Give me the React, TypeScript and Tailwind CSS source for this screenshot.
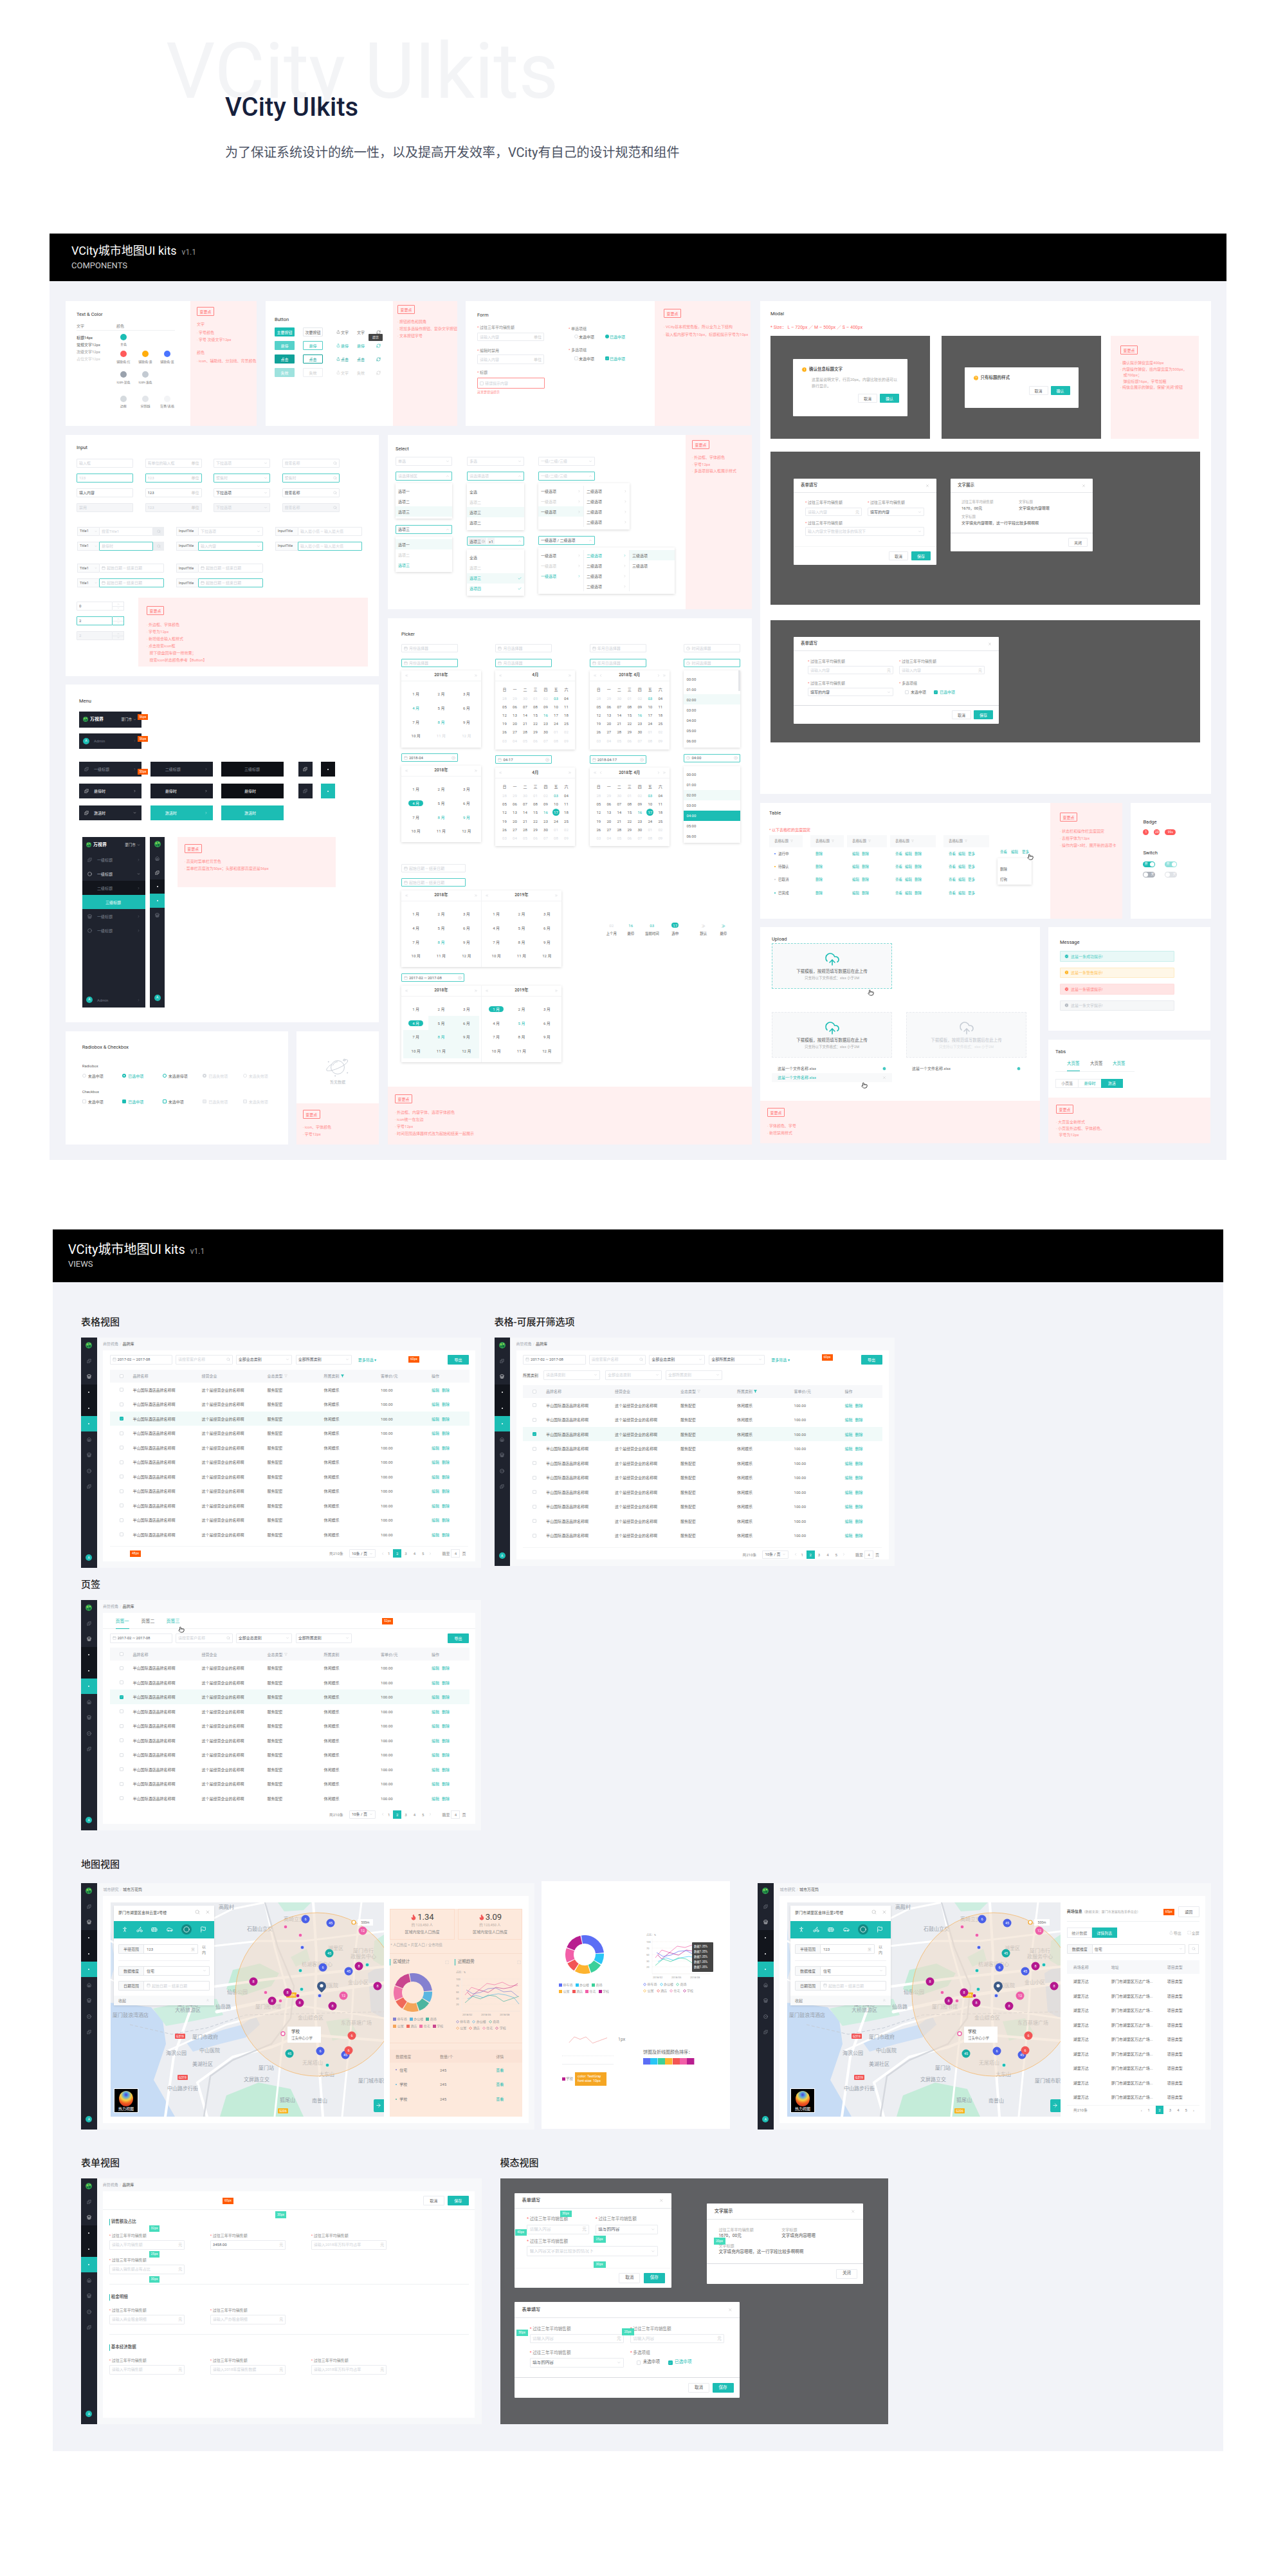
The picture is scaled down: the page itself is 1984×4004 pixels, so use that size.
import React, { type ReactNode } from 'react'
import {
  ArrowRight, Bike, Bus, Calendar, Car, Check, ChevronDown, ChevronLeft, ChevronRight, ChevronUp, ChevronsLeft,
  ChevronsRight, ChevronsUp, Circle, CircleAlert, CircleCheck, CircleHelp, CircleX, Clock, CloudUpload,
  Filter, Flag, Flame, House, Info, Maximize, PersonStanding, Pointer, Puzzle, RefreshCw, Search, Share, Store, X,
} from 'lucide-react'

const ico = 'h-[6px] w-[6px] shrink-0 text-[#c4c8ce]'
const tiny = 'text-[6px] leading-[10px] whitespace-nowrap'
const head = 'text-[7.5px] leading-[10px] whitespace-nowrap text-[#333]'

const Note = ({ lines, className = '', gap = 'leading-[11px]', top = 'mt-[8px]' }: { lines: string[]; className?: string; gap?: string; top?: string }) => (
  <div className={`bg-[#fff0f0] ${className}`}>
    <div className="flex h-[14px] w-[27px] items-center justify-center rounded-[1px] border border-[#ff8080] text-[6px] text-[#ff7070]">变更点</div>
    <div className={top}>
      {lines.map((l, i) => (
        <p key={i} className={`text-[6px] text-[#ff8f8f] whitespace-pre ${gap}`}>{l}</p>
      ))}
    </div>
  </div>
)

const Field = ({ className = '', text, dark, start, end, focus, off }: { className?: string; text?: string; dark?: boolean; start?: ReactNode; end?: ReactNode; focus?: boolean; off?: boolean }) => (
  <div className={`flex shrink-0 items-center gap-[2px] rounded-[1px] border px-[3px] text-[6px] leading-none ${focus ? 'border-[#4fcdc6]' : 'border-[#e9ebef]'} ${off ? 'bg-[#f5f6f8]' : 'bg-white'} ${className}`}>
    {start}
    <span className={`min-w-0 flex-1 overflow-hidden whitespace-nowrap ${dark ? 'text-[#555b66]' : 'text-[#cfd3d9]'}`}>{text}</span>
    {end}
  </div>
)

const Btn = ({ text, className = '' }: { text: string; className?: string }) => (
  <div className={`flex shrink-0 items-center justify-center rounded-[1px] text-[6px] ${className}`}>{text}</div>
)
const Cancel = ({ text = '取消' }: { text?: string }) => <Btn text={text} className="h-[14px] w-[30px] border border-[#e9ebef] bg-white text-[#666]" />
const Save = ({ text = '保存' }: { text?: string }) => <Btn text={text} className="h-[14px] w-[30px] bg-[#1cbdb4] text-white" />

const Logo = ({ size = 'h-[10px] w-[10px]' }: { size?: string }) => (
  <svg viewBox="0 0 20 20" className={`shrink-0 ${size}`}>
    <circle cx="10" cy="10" r="10" fill="#2f9e4f" />
    <circle cx="6" cy="7" r="3" fill="#7dd04d" />
    <circle cx="13" cy="13" r="3.5" fill="#0f6d3a" />
    <circle cx="14" cy="6" r="2" fill="#b7e05a" />
    <circle cx="6" cy="14" r="2" fill="#115e36" />
  </svg>
)

const Avatar = () => <div className="flex h-[10px] w-[10px] shrink-0 items-center justify-center rounded-full bg-[#1cbdb4] text-[5px] text-white">A</div>

const Cursor = ({ className }: { className: string }) => (
  <div className={`absolute ${className}`}>
    <Pointer className="h-[10px] w-[10px] fill-white text-[#333]" />
  </div>
)

const Tag = ({ text, className, orange }: { text: string; className: string; orange?: boolean }) => (
  <div className={`absolute z-10 flex items-center justify-center text-[5px] text-white ${orange ? 'bg-[#ff5a00]' : 'bg-[#45dcbc]'} ${className}`}>{text}</div>
)

/* ---------- hero ---------- */

const Hero = () => (
  <div className="relative h-[363px] pl-[350px] pt-[142px]">
    <div className="absolute left-[258px] top-[36px] text-[120px] font-normal leading-[150px] whitespace-nowrap text-[#f3f4f6]">VCity UIkits</div>
    <h1 className="relative text-[40px] font-medium leading-[50px] text-[#16203c]">VCity UIkits</h1>
    <p className="relative mt-[30px] text-[20px] leading-[30px] text-[#4b5263]">为了保证系统设计的统一性，以及提高开发效率，VCity有自己的设计规范和组件</p>
  </div>
)

const SectionHead = ({ title, sub, h, size, pad }: { title: string; sub: string; h: string; size: string; pad: string }) => (
  <div className={`flex flex-col justify-center bg-black text-white ${h} ${pad}`}>
    <div className="flex items-baseline">
      <span className={`leading-[26px] ${size}`}>{title}</span>
      <span className="ml-[8px] text-[12px] text-[#9a9a9a]">v1.1</span>
    </div>
    <div className="text-[13px] leading-[20px] text-[#d0d0d0]">{sub}</div>
  </div>
)

/* ---------- row one ---------- */

const Swatch = ({ c, t, mt }: { c: string; t: string; mt: string }) => (
  <div className="flex w-[34px] flex-col items-center">
    <div className={`h-[10px] w-[10px] rounded-full ${c}`} />
    <div className={`text-[5px] leading-[8px] whitespace-nowrap text-[#777] ${mt}`}>{t}</div>
  </div>
)

const TextColor = () => (
  <div className="flex h-[194px] w-[297px] bg-white">
    <div className="w-[194px] pl-[17px] pt-[16px]">
      <div className={head}>Text &amp; Color</div>
      <div className={`mt-[8px] flex w-[153px] border-b border-[#eef0f2] pb-[1px] ${tiny} text-[#888]`}>
        <span className="w-[62px]">文字</span>
        <span>颜色</span>
      </div>
      <div className="flex pt-[5px]">
        <div className="w-[56px] text-[6px] leading-[11px] whitespace-nowrap">
          <p className="text-[#333]">标题14px</p>
          <p className="text-[#666]">常规文字12px</p>
          <p className="text-[#999]">次级文字12px</p>
          <p className="text-[#ccc]">占位文字12px</p>
        </div>
        <div>
          <Swatch c="bg-[#1cbdb4]" t="主色" mt="mt-[2px]" />
          <div className="mt-[6px] flex">
            <Swatch c="bg-[#ff5a5a]" t="辅助色-红" mt="mt-[3px]" />
            <Swatch c="bg-[#ffad0d]" t="辅助色-黄" mt="mt-[3px]" />
            <Swatch c="bg-[#4a74ff]" t="辅助色-蓝" mt="mt-[3px]" />
          </div>
          <div className="mt-[11px] flex">
            <Swatch c="bg-[#9aa2ad]" t="icon-深色" mt="mt-[3px]" />
            <Swatch c="bg-[#c3cad2]" t="icon-浅色" mt="mt-[3px]" />
          </div>
          <div className="mt-[17px] flex">
            <Swatch c="bg-[#d5dade]" t="边框" mt="mt-[2px]" />
            <Swatch c="bg-[#e3e6ea]" t="分割线" mt="mt-[2px]" />
            <Swatch c="bg-[#f3f4f6]" t="背景/表格" mt="mt-[2px]" />
          </div>
        </div>
      </div>
    </div>
    <div className="relative flex-1 bg-[#fff0f0] pl-[10px] pt-[9px]">
      <div className="flex h-[14px] w-[27px] items-center justify-center rounded-[1px] border border-[#ff8080] text-[6px] text-[#ff7070]">变更点</div>
      <div className="mt-[8px] text-[6px] text-[#ff8f8f]">
        <p className="leading-[10px]">文字</p>
        <p className="mt-[2px] leading-[11px]">· 字号颜色</p>
        <p className="leading-[11px]">· 字号 次级文字12px</p>
        <p className="mt-[9px] leading-[11px]">颜色</p>
        <p className="mt-[2px] leading-[11px] whitespace-nowrap">· icon、辅助线、分割线、背景颜色</p>
      </div>
    </div>
  </div>
)

const ButtonCard = () => {
  const col1 = ['bg-[#1cbdb4]', 'bg-[#55d1ca]', 'bg-[#10a199]', 'bg-[#9ee2de]']
  const col1t = ['主要按钮', '悬停', '点击', '失效']
  const col2 = ['border-[#e4e6ea] text-[#666]', 'border-[#4fcdc6] text-[#1cbdb4]', 'border-[#10a199] text-[#10a199]', 'border-[#eceef1] bg-[#f5f6f8] text-[#ccc]']
  const col2t = ['次要按钮', '悬停', '点击', '失效']
  const link = ['text-[#777]', 'text-[#1cbdb4]', 'text-[#10a199]', 'text-[#ccc]']
  const col3t = ['文字', '悬停', '点击', '文字']
  const col4t = ['文字', '悬停', '点击', '失效']
  return (
    <div className="flex h-[194px] w-[298px] bg-white">
      <div className="relative w-[205px] pl-[14px] pt-[24px]">
        <div className={head}>Button</div>
        <div className="mt-[7px] flex flex-col gap-[7px]">
          {col1.map((c, i) => (
            <div key={i} className="flex h-[14px] items-center">
              <Btn text={col1t[i]} className={`h-[14px] w-[31px] text-white ${c}`} />
              <Btn text={col2t[i]} className={`ml-[13px] h-[14px] w-[31px] border bg-white ${col2[i]}`} />
              <div className={`ml-[21px] flex w-[32px] items-center gap-[1px] text-[6px] ${link[i]}`}><Share className="h-[6px] w-[6px]" />{col3t[i]}</div>
              <div className={`w-[30px] text-[6px] ${link[i]}`}>{col4t[i]}</div>
              <RefreshCw className={`h-[7px] w-[7px] ${link[i]}`} />
            </div>
          ))}
        </div>
        <div className="absolute left-[160px] top-[51px] flex h-[11px] w-[22px] items-center justify-center rounded-[1px] bg-[#444] text-[5px] text-white">提示</div>
      </div>
      <Note className="flex-1 pl-[7px] pt-[6px]" top="mt-[6px]" gap="leading-[11px]" lines={['· 按钮颜色和圆角', '· 增加多选操作按钮、复杂文字按钮', '· 文本按钮字号']} />
    </div>
  )
}

const FormLabel = ({ text, className = '' }: { text: string; className?: string }) => (
  <div className={`${tiny} text-[#888] ${className}`}><span className="text-[#ff6b6b]">* </span>{text}</div>
)

const CheckBox = ({ on }: { on?: boolean }) => (
  <div className={`flex h-[6px] w-[6px] shrink-0 items-center justify-center rounded-[1px] border ${on ? 'border-[#1cbdb4] bg-[#1cbdb4]' : 'border-[#dde0e4] bg-white'}`}>
    {on && <Check className="h-[5px] w-[5px] text-white" />}
  </div>
)

const FormCard = () => (
  <div className="flex h-[194px] w-[443px] bg-white">
    <div className="w-[294px] pl-[18px] pt-[17px]">
      <div className={head}>Form</div>
      <div className="flex">
        <div className="w-[142px] pt-[9px]">
          <FormLabel text="过往三年平均销售额" />
          <Field className="mt-[3px] h-[13px] w-[104px]" text="请输入内容" end={<span className="text-[#ccc]">单位</span>} />
          <FormLabel className="mt-[10px]" text="编辑时禁用" />
          <Field className="mt-[1px] h-[15px] w-[104px]" text="请输入内容" end={<span className="text-[#ccc]">单位</span>} />
          <FormLabel className="mt-[8px]" text="标题" />
          <Field className="mt-[3px] h-[17px] w-[105px] !border-[#ff8a8a]" start={<CheckBox />} text="错误提示内容" />
          <div className="text-[5px] leading-[10px] text-[#ff8080]">这里是错误提示</div>
        </div>
        <div className="pt-[11px]">
          <div className={`${tiny} text-[#888]`}><span className="text-[#ff6b6b]">* </span>单选项组</div>
          <div className="mt-[2px] flex h-[10px] items-center text-[6px]"><div className="ml-[9px] h-[6px] w-[6px] rounded-full border border-[#dde0e4]" /><span className="ml-[1px] w-[41px] text-[#666]">未选中项</span><div className="h-[6px] w-[6px] rounded-full bg-[#1cbdb4]" /><span className="ml-[1px] text-[#1cbdb4]">已选中项</span></div>
          <div className={`${tiny} mt-[11px] text-[#888]`}><span className="text-[#ff6b6b]">* </span>多选项组</div>
          <div className="mt-[3px] flex h-[10px] items-center text-[6px]"><span className="ml-[9px]"><CheckBox /></span><span className="ml-[1px] w-[41px] text-[#666]">未选中项</span><CheckBox on /><span className="ml-[1px] text-[#1cbdb4]">已选中项</span></div>
        </div>
      </div>
    </div>
    <Note className="flex-1 pl-[14px] pt-[12px]" top="mt-[8px]" gap="leading-[12px]" lines={['· VCity基本视觉色板，所以全为上下结构', '· 输入框内部字号为10px，标题和提示字号为10px']} />
  </div>
)

/* ---------- input card ---------- */

const InputRow = ({ cells }: { cells: ReactNode[] }) => <div className="flex gap-[18.5px]">{cells}</div>

const unit = <span className="text-[#ccc]">单位</span>
const sel = <ChevronDown className={ico} />
const srch = <Search className={ico} />
const cal = <Calendar className={ico} />

const Group = ({ head: title, children, w = 'w-[34px]', noArrow }: { head: string; children: ReactNode; w?: string; noArrow?: boolean }) => (
  <div className="flex h-[14px] w-[135px]">
    <div className={`flex shrink-0 items-center justify-between rounded-l-[1px] border border-r-0 border-[#e9ebef] bg-[#fafbfc] px-[3px] text-[5.5px] text-[#666] ${w}`}>{title}{!noArrow && <ChevronDown className="h-[4px] w-[4px] text-[#bbb]" />}</div>
    <div className="flex min-w-0 flex-1">{children}</div>
  </div>
)

const InputCard = () => (
  <div className="h-[375px] w-[487px] bg-white pl-[17px] pt-[15px]">
    <div className={head}>Input</div>
    <div className="mt-[12px] flex flex-col gap-[9px]">
      <InputRow cells={[
        <Field key="a" className="h-[14px] w-[88px]" text="输入框" />,
        <Field key="b" className="h-[14px] w-[88px]" text="有单位的输入框" end={unit} />,
        <Field key="c" className="h-[14px] w-[88px]" text="下拉选项" end={sel} />,
        <Field key="d" className="h-[14px] w-[89px]" text="搜索名称" end={srch} />,
      ]} />
      <InputRow cells={[
        <Field key="a" focus className="h-[14px] w-[88px]" text="123" />,
        <Field key="b" focus className="h-[14px] w-[88px]" text="123" end={unit} />,
        <Field key="c" focus className="h-[14px] w-[88px]" text="聚焦时" end={sel} />,
        <Field key="d" focus className="h-[14px] w-[89px]" text="聚焦时" end={srch} />,
      ]} />
      <InputRow cells={[
        <Field key="a" dark className="h-[14px] w-[88px]" text="填入内容" />,
        <Field key="b" dark className="h-[14px] w-[88px]" text="123" end={unit} />,
        <Field key="c" dark className="h-[14px] w-[88px]" text="下拉选项" end={sel} />,
        <Field key="d" dark className="h-[14px] w-[89px]" text="搜索名称" end={srch} />,
      ]} />
      <InputRow cells={[
        <Field key="a" off className="h-[14px] w-[88px]" text="禁用" />,
        <Field key="b" off className="h-[14px] w-[88px]" text="123" end={unit} />,
        <Field key="c" off className="h-[14px] w-[88px]" text="下拉选项" end={sel} />,
        <Field key="d" off className="h-[14px] w-[89px]" text="搜索名称" end={srch} />,
      ]} />
    </div>
    <div className="ml-[1px] mt-[22.5px] flex flex-col gap-[9px]">
      <div className="flex gap-[19px]">
        <Group head="Title1"><Field className="h-[14px] flex-1" text="搜索Title1" /><div className="flex w-[17px] items-center justify-center bg-[#eceef1]">{srch}</div></Group>
        <Group head="InputTitle" noArrow><Field className="h-[14px] flex-1" text="下拉选项" end={sel} /></Group>
        <Group head="InputTitle" noArrow w="w-[35px]"><Field className="h-[14px] flex-1" text="输入最小值   ~   输入最大值" /></Group>
      </div>
      <div className="flex gap-[19px]">
        <Group head="Title1"><Field focus className="h-[14px] flex-1" text="悬停时" /><div className="flex w-[17px] items-center justify-center bg-[#eceef1]">{srch}</div></Group>
        <Group head="InputTitle" noArrow><Field focus className="h-[14px] flex-1" text="输入内容" end={sel} /></Group>
        <Group head="InputTitle" noArrow w="w-[35px]"><Field focus className="h-[14px] flex-1" text="输入最小值   ~   输入最大值" /></Group>
      </div>
    </div>
    <div className="ml-[1px] mt-[20.5px] flex flex-col gap-[9px]">
      <div className="flex gap-[19px]">
        <Group head="Title1"><Field className="h-[14px] flex-1" start={cal} text="起始日期  ~  结束日期" /></Group>
        <Group head="InputTitle" noArrow><Field className="h-[14px] flex-1" start={cal} text="起始日期  ~  结束日期" /></Group>
      </div>
      <div className="flex gap-[19px]">
        <Group head="Title1"><Field focus className="h-[14px] flex-1" start={cal} text="起始日期  ~  结束日期" /></Group>
        <Group head="InputTitle" noArrow><Field focus className="h-[14px] flex-1" start={cal} text="起始日期  ~  结束日期" /></Group>
      </div>
    </div>
    <div className="mt-[16px] flex">
      <div className="flex w-[96px] flex-col gap-[9px] pt-[6px]">
        {[{ t: '0', f: false, o: false }, { t: '2', f: true, o: false }, { t: '2', f: false, o: true }].map((n, i) => (
          <div key={i} className="flex h-[14px] w-[74px]">
            <Field dark={!n.o} focus={n.f} off={n.o} className="h-[14px] flex-1" text={n.t} />
            <div className={`flex w-[18px] flex-col border border-l-0 ${n.f ? 'border-[#4fcdc6]' : 'border-[#e9ebef]'} ${n.o ? 'bg-[#f5f6f8]' : ''}`}>
              <div className="flex flex-1 items-center justify-center border-b border-[#e9ebef]"><ChevronUp className="h-[4px] w-[4px] text-[#bbb]" /></div>
              <div className="flex flex-1 items-center justify-center"><ChevronDown className="h-[4px] w-[4px] text-[#bbb]" /></div>
            </div>
          </div>
        ))}
      </div>
      <Note className="h-[107px] w-[357px] pl-[13px] pt-[13px]" top="mt-[9px]" gap="leading-[11px]" lines={['· 外边框、字体颜色', '· 字号为12px', '· 新增组合输入框样式', '· 点击搜索icon框', '   按下键盘回车键一样效果；', '   搜索icon状态颜色参考【Button】']} />
    </div>
  </div>
)

/* ---------- select ---------- */

const Opt = ({ t, tone = 'text-[#666]', bg = '', end }: { t: string; tone?: string; bg?: string; end?: ReactNode }) => (
  <div className={`flex h-[16px] items-center justify-between px-[4px] text-[6px] whitespace-nowrap ${tone} ${bg}`}>{t}{end}</div>
)
const drop = 'bg-white shadow-[0_1px_4px_rgba(0,0,0,0.16)]'
const arrowR = <ChevronRight className="h-[5px] w-[5px] text-[#bbb]" />
const arrowT = <ChevronRight className="h-[5px] w-[5px] text-[#1cbdb4]" />

const SelectCard = () => (
  <div className="flex h-[271px] w-[566px] bg-white">
    <div className="w-[463px] pl-[12px] pt-[16.5px]">
      <div className={head}>Select</div>
      <div className="mt-[7px] flex">
        <div className="w-[111px]">
          <Field className="h-[14px] w-[88px]" text="单选" end={sel} />
          <Field focus className="mt-[9px] h-[14px] w-[88px]" text="请选择城区" end={<ChevronUp className={ico} />} />
          <div className={`mt-[4.5px] w-[88px] pb-[3px] pt-[4px] ${drop}`}>
            <Opt t="选项一" /><Opt t="选项二" /><Opt t="选项三" bg="bg-[#f1faf9]" />
          </div>
          <Field focus dark className="mt-[9.5px] h-[14px] w-[88px]" text="选项三" end={<ChevronUp className={ico} />} />
          <div className={`mt-[4.5px] w-[88px] pb-[3px] pt-[4px] ${drop}`}>
            <Opt t="选项一" bg="bg-[#f1faf9]" /><Opt t="选项二" tone="text-[#ccc]" /><Opt t="选项三" tone="text-[#1cbdb4]" />
          </div>
        </div>
        <div className="w-[111px]">
          <Field className="h-[14px] w-[88.5px]" text="多选" end={sel} />
          <Field focus className="mt-[9px] h-[14px] w-[88.5px]" text="请选择选项" end={<ChevronUp className={ico} />} />
          <div className={`mt-[4.5px] w-[88.5px] pb-[4px] pt-[5px] ${drop}`}>
            <Opt t="全选" /><Opt t="选项二" tone="text-[#ccc]" /><Opt t="选项三" bg="bg-[#f1faf9]" /><Opt t="选项二" />
          </div>
          <div className="mt-[10px] flex h-[14px] w-[88.5px] items-center gap-[2px] rounded-[1px] border border-[#4fcdc6] px-[1px] text-[6px] text-[#666]">
            <span className="flex h-[10px] items-center gap-[1px] bg-[#f1f2f4] px-[2px]">选项三<CircleX className="h-[5px] w-[5px] text-[#aaa]" /></span>
            <span className="flex h-[10px] items-center bg-[#f1f2f4] px-[2px]">+1</span>
            <span className="ml-auto mr-[2px]"><ChevronUp className={ico} /></span>
          </div>
          <div className={`mt-[5.5px] w-[88.5px] pb-[3px] pt-[5px] ${drop}`}>
            <Opt t="全选" /><Opt t="选项二" tone="text-[#ccc]" />
            <Opt t="选项三" tone="text-[#1cbdb4]" bg="bg-[#f1faf9]" end={<Check className="h-[6px] w-[6px] text-[#1cbdb4]" />} />
            <Opt t="选项四" tone="text-[#1cbdb4]" end={<Check className="h-[6px] w-[6px] text-[#1cbdb4]" />} />
          </div>
        </div>
        <div>
          <Field className="h-[14px] w-[88px]" text="一级/二级/三级" end={sel} />
          <Field focus className="mt-[9px] h-[14px] w-[88px]" text="一级/二级/三级" end={<ChevronUp className={ico} />} />
          <div className={`mt-[4.5px] flex w-[141.5px] py-[4px] ${drop}`}>
            <div className="w-[71px] border-r border-[#f0f1f3]">
              <Opt t="一级选项" end={arrowR} /><Opt t="一级选项" tone="text-[#ccc]" end={arrowR} /><Opt t="一级选项" bg="bg-[#f1faf9]" end={arrowR} />
            </div>
            <div className="flex-1">
              <Opt t="二级选项" end={arrowR} /><Opt t="二级选项" end={arrowR} /><Opt t="二级选项" end={arrowR} /><Opt t="二级选项" end={arrowR} />
            </div>
          </div>
          <Field focus dark className="mt-[9.5px] h-[14px] w-[88px]" text="一级选项 / 二级选项" end={<ChevronUp className={ico} />} />
          <div className={`mt-[4.5px] flex w-[212px] py-[4px] ${drop}`}>
            <div className="w-[71px] border-r border-[#f0f1f3]">
              <Opt t="一级选项" end={arrowR} /><Opt t="一级选项" tone="text-[#ccc]" end={arrowR} /><Opt t="一级选项" tone="text-[#1cbdb4]" end={arrowT} />
            </div>
            <div className="w-[71px] border-r border-[#f0f1f3]">
              <Opt t="二级选项" tone="text-[#1cbdb4]" end={arrowT} /><Opt t="二级选项" end={arrowR} /><Opt t="二级选项" end={arrowR} /><Opt t="二级选项" end={arrowR} />
            </div>
            <div className="flex-1">
              <Opt t="三级选项" bg="bg-[#f1faf9]" /><Opt t="三级选项" />
            </div>
          </div>
        </div>
      </div>
    </div>
    <Note className="flex-1 pl-[10px] pt-[8px]" top="mt-[8px]" gap="leading-[10.7px]" lines={['· 外边框、字体颜色', '· 字号12px', '· 多选项目输入框展示样式']} />
  </div>
)

/* ---------- picker ---------- */

const PanelHead = ({ title, inner }: { title: string; inner?: boolean }) => (
  <div className="flex h-[17px] items-center justify-between border-b border-[#f2f3f5] px-[5px] text-[6.5px] font-medium text-[#444]">
    <span className="flex gap-[3px]"><ChevronsLeft className={ico} />{inner && <ChevronLeft className={ico} />}</span>
    <span>{title}</span>
    <span className="flex gap-[3px]">{inner && <ChevronRight className={ico} />}<ChevronsRight className={ico} /></span>
  </div>
)

const MonthGrid = ({ teal = [], mute = [], on = [], band = [] }: { teal?: number[]; mute?: number[]; on?: number[]; band?: number[] }) => (
  <div className="grid grid-cols-3 px-[3px] pt-[9px]">
    {Array.from({ length: 12 }, (_, i) => i + 1).map(m => (
      <div key={m} className={`flex h-[21.7px] items-center justify-center text-[6px] ${band.includes(m) ? 'bg-[#f1faf9]' : ''}`}>
        <span className={`rounded-full px-[6px] py-[1px] leading-[7px] ${on.includes(m) ? 'bg-[#1cbdb4] text-white' : teal.includes(m) ? 'text-[#1cbdb4]' : mute.includes(m) ? 'text-[#d5d8dd]' : 'text-[#666]'}`}>{m} 月</span>
      </div>
    ))}
  </div>
)

const MonthPanel = ({ h = 'h-[119px]', ...rest }: { h?: string; teal?: number[]; mute?: number[]; on?: number[] }) => (
  <div className={`w-[124px] ${drop} ${h}`}>
    <PanelHead title="2018年" />
    <MonthGrid {...rest} />
  </div>
)

const days = ['28', '29', '30', '01', '02', '03', '04', '05', '06', '07', '08', '09', '10', '11', '12', '13', '14', '15', '16', '17', '18', '19', '20', '21', '22', '23', '24', '25', '26', '27', '28', '29', '30', '01', '02', '03', '04', '05', '06', '07', '08', '09']

const DatePanel = ({ title, inner, on, h = 'h-[123.4px]' }: { title: string; inner?: boolean; on?: boolean; h?: string }) => (
  <div className={`w-[124px] ${drop} ${h}`}>
    <PanelHead title={title} inner={inner} />
    <div className="grid grid-cols-7 px-[6px] pt-[6px] text-center text-[6px]">
      {['日', '一', '二', '三', '四', '五', '六'].map(d => <div key={d} className="h-[13.5px] leading-[13.5px] text-[#666]">{d}</div>)}
      {days.map((d, i) => {
        const muted = i < 5 || i >= 33
        const teal = i === 5 || i === 18
        const sel17 = on && i === 19
        return (
          <div key={i} className="flex h-[13.2px] items-center justify-center">
            <span className={`flex h-[11px] w-[11px] items-center justify-center rounded-full ${sel17 ? 'bg-[#1cbdb4] text-white' : teal ? 'text-[#1cbdb4]' : muted ? 'text-[#d8dbdf]' : 'text-[#666]'}`}>{d}</span>
          </div>
        )
      })}
    </div>
  </div>
)

const TimePanel = ({ active, scroll, h }: { active?: boolean; scroll?: boolean; h: string }) => (
  <div className={`relative w-[88px] pt-[5px] ${drop} ${h}`}>
    {['00:00', '01:00', '02:00', '03:00', '04:00', '05:00', '06:00'].map((t, i) => (
      <div key={t} className={`flex h-[16px] items-center pl-[4px] text-[6px] ${i === 2 ? 'bg-[#f1faf9] text-[#666]' : active && i === 4 ? 'bg-[#1cbdb4] text-white' : 'text-[#666]'}`}>{t}</div>
    ))}
    {scroll && <div className="absolute right-0 top-0 h-[32px] w-[3px] bg-[#e4e6e9]" />}
  </div>
)

const RangePanel = ({ second }: { second?: boolean }) => (
  <div className={`flex h-[119px] w-[249px] ${drop}`}>
    <div className="w-[125px] border-r border-[#f2f3f5]">
      <PanelHead title="2018年" />
      {second ? <MonthGrid on={[4]} teal={[8]} band={[5, 6, 7, 8, 9, 10, 11, 12]} /> : <MonthGrid teal={[8]} />}
    </div>
    <div className="flex-1">
      <PanelHead title="2019年" />
      {second ? <MonthGrid on={[1]} teal={[5]} /> : <MonthGrid />}
    </div>
  </div>
)

const clock = <Clock className={ico} />
const xc = <CircleX className={ico} />

const Legend = ({ v, tone, t, w, pill }: { v: string; tone: string; t: string; w: string; pill?: boolean }) => (
  <div className={`flex flex-col items-center ${w}`}>
    <div className={`flex h-[10px] items-center text-[6px] ${tone}`}>
      {pill ? <span className="flex h-[8px] w-[11px] items-center justify-center rounded-full bg-[#1cbdb4] text-white">{v}</span> : v}
    </div>
    <div className="mt-[3px] text-[5.5px] leading-[10px] whitespace-nowrap text-[#555]">{t}</div>
  </div>
)

const PickerCard = () => (
  <div className="flex h-[818px] w-[566px] flex-col justify-between bg-white">
    <div className="pl-[21px] pt-[20px]">
      <div className={head}>Picker</div>
      <div className="mt-[10px] flex">
        <div className="w-[146.4px]">
          <Field className="h-[13px] w-[88px]" start={cal} text="月份选择器" />
          <Field focus className="mt-[10px] h-[13px] w-[88px]" start={cal} text="月份选择器" />
          <div className="mt-[5px]"><MonthPanel h="h-[120px]" teal={[4, 8]} mute={[11, 12]} /></div>
          <Field focus dark className="mt-[9px] h-[13px] w-[88px]" start={cal} text="2018-04" end={xc} />
          <div className="mt-[6px]"><MonthPanel on={[4]} teal={[8, 9]} /></div>
        </div>
        <div className="w-[146.4px]">
          <Field className="h-[13px] w-[88px]" start={cal} text="月日选择器" />
          <Field focus className="mt-[10px] h-[13px] w-[88px]" start={cal} text="月日选择器" />
          <div className="mt-[5px]"><DatePanel title="4月" /></div>
          <Field focus dark className="mt-[9px] h-[13px] w-[88px]" start={cal} text="04-17" end={xc} />
          <div className="mt-[6px]"><DatePanel title="4月" on h="h-[122px]" /></div>
        </div>
        <div className="w-[146.6px]">
          <Field className="h-[13px] w-[88px]" start={cal} text="年月日选择器" />
          <Field focus className="mt-[10px] h-[13px] w-[88px]" start={cal} text="年月日选择器" />
          <div className="mt-[5px]"><DatePanel title="2018年 4月" inner /></div>
          <Field focus dark className="mt-[9px] h-[13px] w-[88px]" start={cal} text="2018-04-17" end={xc} />
          <div className="mt-[6px]"><DatePanel title="2018年 4月" inner on h="h-[122px]" /></div>
        </div>
        <div>
          <Field className="h-[13px] w-[88px]" start={clock} text="时间选择器" />
          <Field focus className="mt-[10px] h-[13px] w-[88px]" start={clock} text="时间选择器" />
          <div className="mt-[5px]"><TimePanel h="h-[120px]" scroll /></div>
          <Field focus dark className="mt-[9.5px] h-[13px] w-[88px]" start={clock} text="04:00" end={xc} />
          <div className="mt-[6px]"><TimePanel h="h-[119px]" active /></div>
        </div>
      </div>
      <div className="mt-[27.7px] flex">
        <div className="w-[249px]">
          <Field className="h-[13px] w-[100px]" start={cal} text="起始日期   ~   结束日期" />
          <Field focus className="mt-[9px] h-[13px] w-[100px]" start={cal} text="起始日期   ~   结束日期" />
          <div className="mt-[6px]"><RangePanel /></div>
          <Field focus dark className="mt-[10px] h-[13px] w-[98px]" start={cal} text="2017-02   ~   2017-08" end={xc} />
          <div className="mt-[5.7px]"><RangePanel second /></div>
        </div>
        <div className="ml-[62.7px] flex pt-[90px]">
          <Legend v="02" tone="text-[#d5d8dd]" t="上个月" w="w-[30px]" />
          <Legend v="16" tone="text-[#1cbdb4]" t="悬停" w="w-[30px]" />
          <Legend v="03" tone="text-[#1cbdb4]" t="当前时间" w="w-[36px]" />
          <Legend v="17" tone="" t="选中" w="w-[36px]" pill />
          <Legend v="≫" tone="text-[#ccc]" t="默认" w="w-[52px]" />
          <Legend v="≫" tone="text-[#1cbdb4]" t="悬停" w="w-[10px]" />
        </div>
      </div>
    </div>
    <Note className="h-[90px] pl-[11px] pt-[12px]" top="mt-[8px]" gap="leading-[11px]" lines={['· 外边框、内容字体、选项字体颜色', '· icon统一在左边', '· 字号12px', '· 时间范围选择器样式改为起始和结束一起展示']} />
  </div>
)

/* ---------- menu ---------- */

const MenuBar = ({ icon, t, tone = 'text-[#8b909b]', bg = 'bg-[#1f232e]', end = true, open, pad = 'pl-[23px]' }: { icon?: boolean; t: string; tone?: string; bg?: string; end?: boolean; open?: boolean; pad?: string }) => (
  <div className={`relative flex h-[23px] w-[97px] shrink-0 items-center pr-[8px] text-[6px] ${bg} ${tone} ${pad}`}>
    {icon && <Puzzle className="absolute left-[8px] h-[7px] w-[7px]" />}
    <span>{t}</span>
    {end && (open ? <ChevronDown className="ml-auto h-[5px] w-[5px]" /> : <ChevronRight className="ml-auto h-[5px] w-[5px]" />)}
  </div>
)

const Dot = () => <div className="h-[2px] w-[2px] rounded-full bg-white" />

const SqIcon = ({ bg, children }: { bg: string; children: ReactNode }) => (
  <div className={`flex h-[23px] w-[22px] items-center justify-center ${bg}`}>{children}</div>
)

const SideRow = ({ icon, t, tone = 'text-[#7f8590]', bg = '', open, pad = 'pl-[23px]' }: { icon?: ReactNode; t: string; tone?: string; bg?: string; open?: boolean; pad?: string }) => (
  <div className={`relative flex h-[22px] items-center pr-[8px] text-[6px] ${tone} ${bg} ${pad}`}>
    {icon && <span className="absolute left-[8px]">{icon}</span>}
    <span>{t}</span>
    {open ? <ChevronDown className="ml-auto h-[5px] w-[5px]" /> : <ChevronRight className="ml-auto h-[5px] w-[5px]" />}
  </div>
)

type RailKey = 'logo' | 'puzzle' | 'puzzleLit' | 'file' | 'fileLit' | 'home' | 'check' | 'dot1' | 'dot2' | 'dot3'

const Rail = ({ items, w, item }: { items: RailKey[]; w: string; item: string }) => (
  <div className={`flex h-full shrink-0 flex-col bg-[#1f232e] ${w}`}>
    {items.map((k, i) => (
      <div key={i} className={`flex shrink-0 items-center justify-center ${item} ${k === 'dot1' || k === 'dot2' ? 'bg-[#12151c]' : k === 'dot3' ? 'bg-[#1cbdb4]' : ''}`}>
        {k === 'logo' && <Logo />}
        {k === 'puzzle' && <Puzzle className="h-[7px] w-[7px] text-[#8b909b]" />}
        {k === 'puzzleLit' && <Puzzle className="h-[7px] w-[7px] text-white" />}
        {k === 'file' && <Store className="h-[7px] w-[7px] text-[#8b909b]" />}
        {k === 'fileLit' && <Store className="h-[7px] w-[7px] text-white" />}
        {k === 'home' && <House className="h-[7px] w-[7px] text-[#8b909b]" />}
        {k === 'check' && <CircleCheck className="h-[7px] w-[7px] text-[#8b909b]" />}
        {(k === 'dot1' || k === 'dot2' || k === 'dot3') && <Dot />}
      </div>
    ))}
    <div className="mt-auto flex justify-center pb-[10.6px]"><Avatar /></div>
  </div>
)

const MenuCard = () => (
  <div className="relative h-[525px] w-[487px] bg-white pl-[21px] pt-[21px]">
    <div className={head}>Menu</div>
    <div className="mt-[10.6px] flex h-[25px] w-[97px] items-center bg-[#1f232e] pl-[6px] pr-[8px] text-white">
      <Logo size="h-[8px] w-[8px]" /><span className="ml-[3px] text-[7px] font-bold">万视界</span>
      <span className="ml-auto text-[5.5px] text-[#ccc]">厦门市</span><ChevronDown className="ml-[2px] h-[5px] w-[5px] text-[#ccc]" />
    </div>
    <div className="mt-[9px] flex h-[24px] w-[97px] items-center bg-[#1f232e] pl-[6px] pr-[8px] text-[6px] text-[#6f7580]">
      <Avatar /><span className="ml-[7px]">Admin</span><ChevronRight className="ml-auto h-[5px] w-[5px]" />
    </div>
    <div className="mt-[20.5px] flex flex-col gap-[11px]">
      <div className="flex">
        <MenuBar icon t="一级标题" />
        <div className="ml-[13.7px]"><MenuBar t="二级标题" bg="bg-[#1a1e28]" /></div>
        <div className="ml-[13.3px]"><MenuBar t="三级标题" end={false} bg="bg-[#0e1015]" pad="pl-[36px]" /></div>
        <div className="ml-[22.7px]"><SqIcon bg="bg-[#1f232e]"><Puzzle className="h-[7px] w-[7px] text-white" /></SqIcon></div>
        <div className="ml-[13px]"><SqIcon bg="bg-[#0e1015]"><Dot /></SqIcon></div>
      </div>
      <div className="flex">
        <MenuBar icon t="悬停时" tone="text-white" />
        <div className="ml-[13.7px]"><MenuBar t="悬停时" tone="text-white" bg="bg-[#1a1e28]" /></div>
        <div className="ml-[13.3px]"><MenuBar t="悬停时" tone="text-white" end={false} bg="bg-[#0e1015]" pad="pl-[36px]" /></div>
        <div className="ml-[22.7px]"><SqIcon bg="bg-[#1f232e]"><Puzzle className="h-[7px] w-[7px] text-[#8b909b]" /></SqIcon></div>
        <div className="ml-[13px]"><SqIcon bg="bg-[#1cbdb4]"><Dot /></SqIcon></div>
      </div>
      <div className="flex">
        <MenuBar icon t="激活时" tone="text-white" open />
        <div className="ml-[13.7px]"><MenuBar t="激活时" tone="text-white" bg="bg-[#1cbdb4]" /></div>
        <div className="ml-[13.3px]"><MenuBar t="激活时" tone="text-white" end={false} bg="bg-[#1cbdb4]" pad="pl-[36px]" /></div>
      </div>
    </div>
    <div className="mt-[26px] flex">
      <div className="ml-[5px] flex h-[265px] w-[97.7px] flex-col bg-[#1f232e]">
        <div className="flex h-[24px] shrink-0 items-center pl-[6px] pr-[8px] text-white">
          <Logo size="h-[8px] w-[8px]" /><span className="ml-[3px] text-[7px] font-bold">万视界</span>
          <span className="ml-auto text-[5.5px] text-[#ccc]">厦门市</span><ChevronDown className="ml-[2px] h-[5px] w-[5px] text-[#ccc]" />
        </div>
        <SideRow icon={<Puzzle className="h-[7px] w-[7px]" />} t="一级标题" />
        <SideRow icon={<Circle className="h-[7px] w-[7px]" />} t="一级标题" tone="text-[#d5d8dd]" open />
        <SideRow t="二级标题" bg="bg-[#12151c]" />
        <div className="flex h-[22px] items-center bg-[#1cbdb4] pl-[36px] text-[6px] text-white">三级标题</div>
        <SideRow icon={<Store className="h-[7px] w-[7px]" />} t="一级标题" />
        <SideRow icon={<Circle className="h-[7px] w-[7px]" />} t="一级标题" />
        <div className="mt-auto flex h-[24px] items-center pl-[6px] pr-[8px] text-[6px] text-[#6f7580]">
          <Avatar /><span className="ml-[7px]">Admin</span><ChevronRight className="ml-auto h-[5px] w-[5px]" />
        </div>
      </div>
      <div className="ml-[7.6px] h-[265px]">
        <Rail w="w-[22.7px]" item="h-[22px]" items={['logo', 'home', 'puzzleLit', 'dot1', 'dot3', 'file']} />
      </div>
      <Note className="ml-[19.7px] h-[78px] w-[246.6px] pl-[11px] pt-[11px]" top="mt-[7px]" gap="leading-[11px]" lines={['· 高亮时菜单栏背景色', '· 菜单栏高度改为50px；头部和底部高度还是56px']} />
    </div>
    <Tag orange text="56px" className="left-[112px] top-[46px] h-[9px] w-[16px]" />
    <Tag orange text="56px" className="left-[112px] top-[80px] h-[9px] w-[16px]" />
    <Tag orange text="50px" className="left-[112px] top-[131px] h-[9px] w-[16px]" />
  </div>
)

/* ---------- radio + empty ---------- */

const RadioItem = ({ t, kind, tone, w, border }: { t: string; kind: 'r' | 'c'; tone: string; w: string; border: string }) => (
  <div className={`flex items-center gap-[3px] text-[6px] ${w} ${tone}`}>
    {kind === 'r'
      ? <div className={`flex h-[6px] w-[6px] items-center justify-center rounded-full border ${border}`} />
      : <div className={`h-[6px] w-[6px] rounded-[1px] border ${border}`} />}
    {t}
  </div>
)

const RadioCard = () => (
  <div className="h-[176px] w-[346px] bg-white pl-[25.7px] pt-[20px]">
    <div className={head}>Radiobox &amp; Checkbox</div>
    <div className={`${tiny} mt-[19px] text-[#666]`}>Radiobox</div>
    <div className="mt-[5px] flex h-[10px] items-center">
      <RadioItem kind="r" t="未选中项" tone="text-[#666]" w="w-[62.5px]" border="border-[#dde0e4]" />
      <RadioItem kind="r" t="已选中项" tone="text-[#1cbdb4]" w="w-[62.5px]" border="border-[#1cbdb4] border-[2px]" />
      <RadioItem kind="r" t="未选悬停项" tone="text-[#666]" w="w-[62.5px]" border="border-[#1cbdb4]" />
      <RadioItem kind="r" t="已选失效项" tone="text-[#d5d8dd]" w="w-[62.5px]" border="border-[#d5d8dd] border-[2px]" />
      <RadioItem kind="r" t="未选失效项" tone="text-[#d5d8dd]" w="w-[62.5px]" border="border-[#e4e6e9]" />
    </div>
    <div className={`${tiny} mt-[15px] text-[#666]`}>Checkbox</div>
    <div className="mt-[5px] flex h-[10px] items-center">
      <RadioItem kind="c" t="未选中项" tone="text-[#666]" w="w-[62.5px]" border="border-[#dde0e4]" />
      <RadioItem kind="c" t="已选中项" tone="text-[#1cbdb4]" w="w-[62.5px]" border="border-[#1cbdb4] bg-[#1cbdb4]" />
      <RadioItem kind="c" t="未选中项" tone="text-[#666]" w="w-[62.5px]" border="border-[#1cbdb4]" />
      <RadioItem kind="c" t="已选失效项" tone="text-[#d5d8dd]" w="w-[62.5px]" border="border-[#e1e4e8] bg-[#eef0f2]" />
      <RadioItem kind="c" t="未选失效项" tone="text-[#d5d8dd]" w="w-[62.5px]" border="border-[#e1e4e8] bg-[#f5f6f8]" />
    </div>
  </div>
)

const EmptyCard = () => (
  <div className="flex h-[176px] w-[128px] flex-col bg-white">
    <div className="flex h-[112px] flex-col items-center pt-[40px]">
      <svg viewBox="0 0 40 32" className="h-[32px] w-[38px]" fill="none" stroke="#c8ced6" strokeWidth="1">
        <circle cx="20" cy="16" r="11" />
        <path d="M10 11C4 15 1 19 2 21c1.500 2 12 0 22-5S38 6 36 4c-1-1-4-1-7 1" />
        <path d="M12 13a9 9 0 0 1 8-6" />
        <circle cx="31" cy="4" r="1.600" />
        <path d="M5 6v2M4 7h2M36 24v2M35 25h2M16 29v2M15 30h2" />
      </svg>
      <div className="mt-[2px] text-[6px] text-[#b8bdc4]">暂无数据</div>
    </div>
    <Note className="flex-1 pl-[9.700px] pt-[10px]" top="mt-[7px]" gap="leading-[11px]" lines={['· icon、字体颜色', '· 字号12px']} />
  </div>
)

/* ---------- modal ---------- */

const ConfirmModal = ({ title, desc, icon, className }: { title: string; desc?: boolean; icon: ReactNode; className: string }) => (
  <div className={`rounded-[1px] bg-white px-[13px] ${className}`}>
    <div className="flex items-center gap-[3px] text-[6.5px] font-medium text-[#333]">{icon}{title}</div>
    {desc && <p className="mt-[6px] pl-[16px] text-[6px] leading-[9.500px] text-[#aaa]">这里是说明文字，行高20px。内容比较长的话可以换行显示。</p>}
    <div className="mt-[8px] flex justify-end gap-[4px]">
      <Cancel /><Save text="确认" />
    </div>
  </div>
)

const ModalHead = ({ t }: { t: string }) => (
  <div className="flex h-[22px] items-center justify-between border-b border-[#e4e6e9] px-[11px] text-[6.500px] font-medium text-[#444]">{t}<X className="h-[6px] w-[6px] text-[#bbb]" /></div>
)

const ModalC = () => (
  <div className="h-[134px] w-[222px] rounded-[1px] bg-white">
    <ModalHead t="表单填写" />
    <div className="h-[84px] border-b border-[#f4f5f6] pl-[18px] pt-[10px]">
      <div className="flex gap-[9px]">
        <div className="w-[88px]"><FormLabel text="过往三年平均销售额" /><Field className="mt-[3px] h-[13px] w-[88px]" text="请输入内容" end={<span className="text-[#ccc]">元</span>} /></div>
        <div className="w-[88px]"><FormLabel text="过往三年平均销售额" /><Field dark className="mt-[3px] h-[13px] w-[88px]" text="填写的内容" end={sel} /></div>
      </div>
      <FormLabel className="mt-[6px]" text="过往三年平均销售额" />
      <Field className="mt-[1px] h-[14px] w-[185px]" text="输入内容文字数量比较多的情况下" end={sel} />
    </div>
    <div className="flex justify-end gap-[5px] pr-[9px] pt-[7px]"><Cancel /><Save /></div>
  </div>
)

const ModalD = () => (
  <div className="h-[113px] w-[221px] rounded-[1px] bg-white">
    <ModalHead t="文字展示" />
    <div className="h-[63px] border-b border-[#d9dbdf] pl-[17px] pt-[10px] text-[5.500px] leading-[9px]">
      <div className="flex">
        <div className="w-[89px]"><div className="text-[#aaa]">过往三年平均销售额</div><div className="text-[6px] text-[#555]">1670，00元</div></div>
        <div><div className="text-[#aaa]">文字标题</div><div className="text-[6px] text-[#555]">文字填充内容嗯嗯</div></div>
      </div>
      <div className="mt-[5px] text-[#aaa]">文字标题</div>
      <div className="text-[6px] text-[#555]">文字填充内容嗯嗯，这一行字段比较多啊啊啊</div>
    </div>
    <div className="flex justify-end pr-[8px] pt-[7px]"><Cancel text="关闭" /></div>
  </div>
)

const ModalE = () => (
  <div className="h-[135px] w-[319px] rounded-[1px] bg-white">
    <ModalHead t="表单填写" />
    <div className="h-[85px] border-b border-[#d9dbdf] pl-[22px] pt-[11px]">
      <div className="flex gap-[9px]">
        <div className="w-[133px]"><FormLabel text="过往三年平均销售额" /><Field className="mt-[2px] h-[13px] w-[133px]" text="请输入内容" end={<span className="text-[#ccc]">元</span>} /></div>
        <div className="w-[133px]"><FormLabel text="过往三年平均销售额" /><Field className="mt-[2px] h-[13px] w-[133px]" text="请输入内容" end={<span className="text-[#ccc]">元</span>} /></div>
      </div>
      <div className="mt-[9px] flex gap-[9px]">
        <div className="w-[133px]"><FormLabel text="过往三年平均销售额" /><Field dark className="mt-[2px] h-[13px] w-[133px]" text="填写的内容" end={sel} /></div>
        <div><FormLabel text="多选项组" />
          <div className="ml-[9px] mt-[4px] flex items-center gap-[3px] text-[6px] text-[#666]"><CheckBox />未选中项<span className="ml-[9px]"><CheckBox on /></span><span className="text-[#1cbdb4]">已选中项</span></div>
        </div>
      </div>
    </div>
    <div className="flex justify-end gap-[4px] pr-[9px] pt-[7px]"><Cancel /><Save /></div>
  </div>
)

const ModalCard = () => (
  <div className="h-[766px] w-[701px] bg-white pl-[16px] pt-[15px]">
    <div className={head}>Modal</div>
    <div className="mt-[11px] text-[7px] leading-[10px] whitespace-nowrap text-[#ff6b6b]">* Size： L – 720px ／ M – 500px ／ S – 400px</div>
    <div className="mt-[8px] flex h-[160px]">
      <div className="flex w-[248px] items-center justify-center bg-[#5a5a5a]">
        <ConfirmModal className="h-[89px] w-[178px] pt-[12px]" desc title="确认信息标题文字" icon={<CircleAlert className="h-[9px] w-[9px] fill-[#ffad0d] text-white" />} />
      </div>
      <div className="ml-[18px] flex w-[248px] items-center justify-center bg-[#5a5a5a]">
        <ConfirmModal className="h-[63px] w-[177px] pt-[12px]" title="只有标题的样式" icon={<CircleHelp className="h-[9px] w-[9px] fill-[#ffad0d] text-white" />} />
      </div>
      <Note className="ml-[15px] w-[137px] pl-[15px] pt-[15px]" top="mt-[8px]" gap="leading-[9.500px]" lines={['· 确认提示弹窗宽度400px', '· 内容操作弹窗，给内容宽度为500px，', '   或700px；', '   弹窗标题16px，字号加粗', '· 纯信息展示的弹窗，保留"关闭"按钮']} />
    </div>
    <div className="mt-[20px] flex h-[238px] w-[668px] items-start bg-[#5a5a5a] pl-[36px] pt-[42px]">
      <ModalC />
      <div className="ml-[22px]"><ModalD /></div>
    </div>
    <div className="mt-[24px] h-[190px] w-[668px] bg-[#5a5a5a] pl-[36px] pt-[26px]">
      <ModalE />
    </div>
  </div>
)

/* ---------- table, badge ---------- */

const tableCols = [
  { w: 'w-[52px] ml-[0px]' }, { w: 'w-[52px] ml-[12px]' }, { w: 'w-[62px] ml-[5px]' }, { w: 'w-[71px] ml-[5px]' }, { w: 'w-[71px] ml-[12px]' },
]
const statusRows = [
  { t: '进行中', c: 'bg-[#4a74ff]' }, { t: '待确认', c: 'bg-[#ffad0d]' }, { t: '已取消', c: 'bg-[#ccc]' }, { t: '已完成', c: 'bg-[#1cbdb4]' },
]
const linkSets = [[], ['删除'], ['编辑', '删除'], ['查看', '编辑', '删除'], ['查看', '编辑', '更多']]

const TableCard = () => (
  <div className="relative flex h-[180px] w-[563px] bg-white">
    <div className="relative w-[451px] pl-[14px] pt-[11px]">
      <div className={head}>Table</div>
      <div className={`${tiny} mt-[16px] text-[#ff6b6b]`}>* 以下表格栏的宽度固定</div>
      <div className="mt-[2.500px] flex">
        {tableCols.map((c, i) => (
          <div key={i} className={c.w}>
            <div className="flex h-[19px] items-center gap-[3px] bg-[#f8f9fa] pl-[8px] text-[5.500px] text-[#888]">表格标题<Filter className="h-[4px] w-[4px] text-[#ccc]" /></div>
            {statusRows.map((r, j) => (
              <div key={j} className="flex h-[20.400px] items-center gap-[4px] pl-[8px] text-[5.500px]">
                {i === 0
                  ? <><span className={`h-[2px] w-[2px] rounded-full ${r.c}`} /><span className="text-[#666]">{r.t}</span></>
                  : linkSets[i].map(l => <span key={l} className="text-[#1cbdb4]">{l}</span>)}
              </div>
            ))}
          </div>
        ))}
        <div className="ml-[17px]">
          <div className="mt-[22px] flex gap-[6px] text-[5.500px] text-[#1cbdb4]"><span>查看</span><span>编辑</span><span>更多</span></div>
          <div className={`-ml-[4px] mt-[6px] h-[41px] w-[53px] pl-[4px] pt-[9px] text-[5.500px] leading-[16px] text-[#666] ${drop}`}><p>删除</p><p>打钩</p></div>
        </div>
      </div>
      <Cursor className="left-[415px] top-[79px]" />
    </div>
    <Note className="flex-1 pl-[15px] pt-[15px]" top="mt-[9px]" gap="leading-[11px]" lines={['· 状态栏和操作栏宽度固定', '· 表格字体为12px', '· 操作内容>3时，展开新的选项卡']} />
  </div>
)

const SwitchPill = ({ on, light, t }: { on: boolean; light?: boolean; t: string }) => (
  <div className={`flex h-[9px] w-[19px] items-center rounded-full px-[1px] text-[5px] text-white ${on ? (light ? 'bg-[#8ee0db]' : 'bg-[#1cbdb4]') : light ? 'bg-[#dfe2e6]' : 'bg-[#adb3bb]'} ${on ? 'flex-row-reverse justify-between' : 'justify-between'}`}>
    <span className="h-[7px] w-[7px] rounded-full bg-white" /><span className="px-[1px]">{t}</span>
  </div>
)

const BadgeCard = () => (
  <div className="h-[180px] w-[125px] bg-white pl-[19.400px] pt-[24.500px]">
    <div className={head}>Badge</div>
    <div className="mt-[6.500px] flex items-center text-[5px] text-white">
      <span className="flex h-[9px] w-[9px] items-center justify-center rounded-full bg-[#ff5a5a]">1</span>
      <span className="ml-[8px] flex h-[9px] w-[9px] items-center justify-center rounded-full bg-[#ff5a5a]">20</span>
      <span className="ml-[8px] flex h-[9px] w-[17px] items-center justify-center rounded-full bg-[#ff5a5a]">99+</span>
    </div>
    <div className={`${head} mt-[23px]`}>Switch</div>
    <div className="mt-[7.500px] flex gap-[15px]"><SwitchPill on t="开" /><SwitchPill on light t="开" /></div>
    <div className="mt-[7px] flex gap-[15px]"><SwitchPill on={false} t="关" /><SwitchPill on={false} light t="关" /></div>
  </div>
)

/* ---------- upload, message, tabs ---------- */

const UploadBox = ({ off, focus, className = '' }: { off?: boolean; focus?: boolean; className?: string }) => (
  <div className={`flex h-[71px] w-[187px] flex-col items-center border border-dashed bg-[#f8f9fa] pt-[12px] ${focus ? 'border-[#7fdad5]' : 'border-[#e9ebef]'} ${className}`}>
    <CloudUpload strokeWidth={1.600} className={`h-[24px] w-[24px] ${off ? 'text-[#c8ced6]' : 'text-[#1cbdb4]'}`} />
    <div className={`mt-[2px] text-[6.500px] leading-[10px] whitespace-nowrap ${off ? 'text-[#c4c8ce]' : 'text-[#666]'}`}>下载模板，按规范填写数据后在此上传</div>
    <div className={`text-[5.500px] leading-[10px] whitespace-nowrap ${off ? 'text-[#dcdfe3]' : 'text-[#aaa]'}`}>只支持以下文件格式：xlsx 小于2M</div>
  </div>
)

const tick = <CircleCheck className="h-[6px] w-[6px] fill-[#1cbdb4] text-white" />

const UploadCard = () => (
  <div className="relative flex h-[336px] w-[435px] flex-col bg-white">
    <div className="h-[270px] pl-[18px] pt-[13.600px]">
      <div className={head}>Upload</div>
      <UploadBox focus className="mt-[1.800px]" />
      <div className="mt-[36px] flex gap-[22px]">
        <div>
          <UploadBox />
          <div className="mt-[11.400px] flex h-[10px] w-[187px] items-center justify-between px-[9px] text-[6px] text-[#666]">这是一个文件名称.xlsx{tick}</div>
          <div className="mt-[2px] flex h-[14px] w-[187px] items-center justify-between bg-[#f8f9fa] px-[9px] text-[6px] text-[#1cbdb4]">这是一个文件名称.xlsx<X className="h-[6px] w-[6px] text-[#ccc]" /></div>
        </div>
        <div>
          <UploadBox off />
          <div className="mt-[11.400px] flex h-[10px] w-[187px] items-center justify-between px-[9px] text-[6px] text-[#666]">这是一个文件名称.xlsx{tick}</div>
        </div>
      </div>
    </div>
    <Note className="flex-1 pl-[11px] pt-[11px]" top="mt-[8px]" gap="leading-[11px]" lines={['· 字体颜色、字号', '· 新增禁用样式']} />
    <Cursor className="left-[167px] top-[97px]" />
    <Cursor className="left-[157px] top-[241px]" />
  </div>
)

const Alert = ({ t, c, icon, tone }: { t: string; c: string; icon: ReactNode; tone: string }) => (
  <div className={`flex h-[16.500px] w-[178px] items-center gap-[3px] rounded-[1px] border px-[6px] text-[6px] ${c} ${tone}`}>{icon}{t}</div>
)

const MessageCard = () => (
  <div className="h-[161px] w-[252px] bg-white pl-[18px] pt-[19px]">
    <div className={head}>Message</div>
    <div className="mt-[8px] flex flex-col gap-[9px]">
      <Alert c="border-[#c9efec] bg-[#e9f8f7]" tone="text-[#4fcdc6]" t="这是一条成功提示!" icon={<CircleCheck className="h-[7px] w-[7px] fill-[#1cbdb4] text-white" />} />
      <Alert c="border-[#ffeac2] bg-[#fff7e7]" tone="text-[#ffc35a]" t="这是一条警告提示!" icon={<CircleAlert className="h-[7px] w-[7px] fill-[#ffad0d] text-white" />} />
      <Alert c="border-[#ffdcdc] bg-[#ffe4e4]" tone="text-[#ff8a8a]" t="这是一条错误提示!" icon={<CircleX className="h-[7px] w-[7px] fill-[#ff5a5a] text-white" />} />
      <Alert c="border-[#e9ebef] bg-[#f6f7f8]" tone="text-[#c4c8ce]" t="这是一条文字提示!" icon={<Info className="h-[7px] w-[7px] fill-[#adb3bb] text-white" />} />
    </div>
  </div>
)

const TabsCard = () => (
  <div className="flex h-[161px] w-[252px] flex-col bg-white">
    <div className="h-[90px] pl-[11px] pt-[14px]">
      <div className={head}>Tabs</div>
      <div className="mt-[9px] flex h-[17px] w-[123px] border-b border-[#eef0f2] pl-[18px] text-[6.500px] text-[#666]">
        <span className="h-[17px] w-[36px]"><span className="inline-block h-[16px] border-b border-[#1cbdb4] text-[#1cbdb4]">大页签</span></span>
        <span className="w-[35px]">大页签</span>
        <span className="text-[#1cbdb4]">大页签</span>
      </div>
      <div className="mt-[10.500px] flex h-[14px] w-[105px] text-[6px]">
        <div className="flex flex-1 items-center justify-center border border-[#eceef1] text-[#888]">小页签</div>
        <div className="flex flex-1 items-center justify-center border-y border-[#eceef1] text-[#1cbdb4]">悬停时</div>
        <div className="flex flex-1 items-center justify-center bg-[#1cbdb4] text-white">激活</div>
      </div>
    </div>
    <Note className="flex-1 pl-[12px] pt-[11px]" top="mt-[8px]" gap="leading-[10px]" lines={['· 大页签全新样式', '· 小页签外边框、字体颜色、', '   字号为12px']} />
  </div>
)

/* ---------- table views ---------- */

const tableHead = ['品牌名称', '经营企业', '业态类型', '所属类别', '客单价/元', '操作']
const gridCols = 'grid grid-cols-[36px_107px_102px_88px_88.5px_79px_1fr]'

const TableGrid = ({ rows, filterActive }: { rows: number; filterActive?: boolean }) => (
  <div className="w-[559.400px]">
    <div className={`${gridCols} h-[20.400px] bg-[#f7f8fa] text-[6px] text-[#9096a0]`}>
      <div className="flex items-center justify-center"><CheckBox /></div>
      {tableHead.map((h, i) => (
        <div key={h} className="flex items-center gap-[2px]">
          {h}
          {i === 2 && <Filter className="h-[5px] w-[5px] text-[#ccc]" />}
          {i === 3 && filterActive && <Filter className="h-[5px] w-[5px] fill-[#1cbdb4] text-[#1cbdb4]" />}
        </div>
      ))}
    </div>
    {Array.from({ length: rows }).map((_, r) => (
      <div key={r} className={`${gridCols} h-[22.500px] items-center text-[6px] text-[#666] ${r === 2 ? 'bg-[#f1faf9]' : ''}`}>
        <div className="flex justify-center"><CheckBox on={r === 2} /></div>
        <div>半山国际酒店品牌名称啊</div>
        <div>这个是经营企业的名称啊</div>
        <div>服务配套</div>
        <div>休闲娱乐</div>
        <div>100.00</div>
        <div className="flex gap-[4px] text-[#1cbdb4]"><span>编辑</span><span>删除</span></div>
      </div>
    ))}
  </div>
)

const Pager = () => (
  <div className="flex items-center text-[6px] text-[#888]">
    <span>共210条</span>
    <Field dark className="ml-[9px] h-[13px] w-[41px]" text="10条 / 页" end={sel} />
    <span className="ml-[8px]"><ChevronLeft className={ico} /></span>
    <span className="ml-[5px]">1</span>
    <span className="ml-[5px] flex h-[13px] w-[13px] items-center justify-center bg-[#1cbdb4] text-white">2</span>
    <span className="ml-[5px]">3</span><span className="ml-[10px]">4</span><span className="ml-[10px]">5</span>
    <span className="ml-[7px]"><ChevronRight className={ico} /></span>
    <span className="ml-[15px]">跳至</span><span className="ml-[2px] flex h-[13px] w-[14px] items-center justify-center border border-[#e9ebef]">4</span><span className="ml-[3px]">页</span>
  </div>
)

const railItems: RailKey[] = ['logo', 'puzzle', 'fileLit', 'dot1', 'dot2', 'dot3', 'home', 'file', 'check', 'puzzle']

const FilterRow = ({ more }: { more?: boolean }) => (
  <div className="flex h-[15px] items-center">
    <Field dark className="h-[15px] w-[97.500px]" start={cal} text="2017-02  ~  2017-08" />
    <Field className="ml-[5px] h-[15px] w-[88.700px]" text="请搜索客户名称" end={srch} />
    <Field dark className="ml-[5px] h-[15px] w-[87px]" text="全部业态类别" end={sel} />
    <Field dark className="ml-[6px] h-[15px] w-[87px]" text="全部所属类别" end={sel} />
    {more && <span className="ml-[10px] text-[6px] text-[#1cbdb4]">更多筛选 ▾</span>}
    <Btn text="导出" className="ml-auto mr-[10px] h-[15px] w-[33px] bg-[#1cbdb4] text-white" />
  </div>
)

const Crumb = ({ a, b }: { a: string; b: string }) => (
  <div className="flex h-[19.600px] items-center text-[6px] text-[#a5aab2]">{a}<span className="mx-[2px] text-[#ddd]">/</span><span className="text-[#555]">{b}</span></div>
)

const TableView = ({ mode }: { mode: 'plain' | 'expand' | 'tabs' }) => (
  <div className={`relative flex w-[622px] bg-[#f7f8fa] ${mode === 'expand' ? 'h-[355px]' : 'h-[358px]'}`}>
    <Rail w="w-[24.500px]" item="h-[24.400px]" items={railItems} />
    <div className="min-w-0 flex-1 pl-[9.500px] pr-[9px]">
      <Crumb a="商管视角" b="品牌库" />
      <div className={`relative bg-white ${mode === 'expand' ? 'h-[325px]' : 'h-[328px]'}`}>
        {mode === 'tabs' && (
          <div className="flex h-[25.500px] border-b border-[#eef0f2] pl-[19.600px] pt-[8px] text-[7px] text-[#666]">
            <span className="h-[17.500px] w-[40px]"><span className="inline-block h-[17px] border-b border-[#1cbdb4] text-[#1cbdb4]">页签一</span></span>
            <span className="w-[39px]">页签二</span>
            <span className="text-[#1cbdb4]">页签三</span>
          </div>
        )}
        <div className={`pl-[10.600px] ${mode === 'tabs' ? 'pt-[6.500px]' : 'pt-[7px]'}`}>
          <FilterRow more={mode !== 'tabs'} />
          {mode === 'expand' && (
            <div className="mt-[9px] flex h-[15px] items-center text-[6px] text-[#666]">
              <span className="w-[24px]">所属类别</span>
              <Field className="ml-[8px] h-[15px] w-[88px]" text="请选择类别" end={sel} />
              <Field className="ml-[8px] h-[15px] w-[88px]" text="全部业态类别" end={sel} />
              <Field className="ml-[6px] h-[15px] w-[88px]" text="全部所属类别" end={sel} />
            </div>
          )}
          <div className={mode === 'tabs' ? 'mt-[7.300px]' : 'mt-[8px]'}>
            <TableGrid rows={mode === 'plain' ? 11 : 10} filterActive={mode !== 'tabs'} />
          </div>
        </div>
        <div className={`mx-[10.600px] flex h-[22px] items-center justify-end pr-[4px] ${mode === 'tabs' ? 'mt-[3px]' : 'mt-[7px] border-t border-[#f4f5f6]'}`}>
          <Pager />
        </div>
      </div>
    </div>
    {mode === 'plain' && <><Tag orange text="60px" className="left-[509px] top-[29px] h-[10px] w-[17px]" /><Tag orange text="48px" className="left-[76px] top-[331px] h-[10px] w-[17px]" /></>}
    {mode === 'expand' && <Tag orange text="60px" className="left-[509px] top-[26px] h-[10px] w-[17px]" />}
    {mode === 'tabs' && <><Tag orange text="52px" className="left-[468px] top-[28px] h-[10px] w-[17px]" /><Cursor className="left-[151px] top-[41px]" /></>}
  </div>
)

/* ---------- map ---------- */

type Pin = [number, number, string, string?]
const pins: Pin[] = [
  [303, 26, '#4a60e8', '6'], [342, 32, '#4a60e8', '45'], [272, 38, '#ee5fa8'], [295, 51, '#ee5fa8'], [392, 44, '#ee5fa8', '12'], [298, 70, '#4a60e8'],
  [340, 79, '#16aea6', '45'], [330, 101, '#4a60e8', '6'], [370, 107, '#4a60e8', '45'], [386, 99, '#b5178f', '8'], [399, 97, '#1cbdb4'], [295, 106, '#1cbdb4'],
  [222, 123, '#b5178f', '8'], [415, 130, '#b5178f', '8'], [297, 135, '#1cbdb4'], [241, 140, '#ee5fa8'], [275, 140, '#b5178f', '8'], [291, 145, '#b5178f'],
  [325, 145, '#4a60e8'], [362, 145, '#ee5fa8', '12'], [251, 153, '#b5178f', '8'], [264, 153, '#ee5fa8'], [294, 156, '#b5178f', '8'], [345, 161, '#b5178f', '8'],
  [375, 207, '#f25555', '6'], [278, 235, '#16aea6', '45'], [326, 231, '#4a60e8', '6'], [365, 237, '#4a60e8', '45'], [370, 230, '#f25555', '6'], [337, 253, '#1cbdb4'],
]
const mapLabels: [number, number, string][] = [
  [285, 29, '高崎立交'], [232, 44, '石鼓山立交'], [180, 10, '高殿村'], [350, 74, '湖里区'], [393, 78, '厦门市行'], [393, 87, '政服务中心'], [321, 99, '枋湖客运中心'],
  [197, 142, '仙岳公园'], [338, 132, '厦门医院'], [385, 127, '金山小区'], [120, 161, '厦门海沧'], [120, 170, '大桥旅游区'], [175, 165, '仙岳路'], [245, 165, '厦门图书馆'],
  [31, 178, '厦门鼓浪湾酒店'], [311, 182, '金山综合区'], [382, 190, '东百蔡塘广场'], [147, 212, '厦门市政府'], [102, 237, '海滨公园'], [154, 233, '中山医院'], [143, 254, '美湖社区'],
  [242, 260, '厦门站'], [227, 278, '文屏路立交'], [112, 292, '中山路步行街'], [314, 252, '无尾塔山'], [405, 280, '厦门城市职'], [336, 270, '大东山'], [275, 310, '狐尾山'], [325, 311, '南普山'],
]

const MapSvg = () => (
  <svg viewBox="0 0 425 333" className="h-[333px] w-[425px] bg-[#eceef2]">
    <path d="M0 156 40 160 63 163 81 183 86 220 67 276 100 333H0Z" fill="#c7dcf5" />
    <path d="M118 218 175 198 205 190 225 175 232 190 210 210 170 220 128 232Z" fill="#cfe0f5" />
    <path d="M400 110 425 95V180L405 170Z" fill="#cfe0f5" />
    <path d="M0 40 3 70 8 95 0 120Z" fill="#d4e4f6" />
    <path d="M66 165 130 152 165 150 175 175 125 185 86 192Z" fill="#cdeee0" />
    <path d="M190 105 232 95 262 110 250 130 205 145 180 135Z" fill="#c4ecd9" />
    <path d="M180 300 230 280 280 290 300 333H170Z" fill="#c4ecd9" />
    <path d="M260 0 312 0 300 12 270 14Z" fill="#cdeee0" />
    <path d="M280 85 305 72 310 90 288 100Z" fill="#cdeee0" />
    <path d="M410 60 425 50V100L408 90Z" fill="#cdeee0" />
    <path d="M335 185 370 180 385 205 345 215Z" fill="#cdeee0" />
    <g fill="none" stroke="#fff" strokeLinecap="round">
      <path d="M0 60 60 90 130 40 190 10 240 0" strokeWidth="3" />
      <path d="M140 70 230 60 300 60 425 45" strokeWidth="3" />
      <path d="M130 135 240 120 330 110 425 100" strokeWidth="4" />
      <path d="M165 170 280 145 425 125" strokeWidth="5" />
      <path d="M90 230 180 190 290 160 425 180" strokeWidth="3" />
      <path d="M150 333 135 280 190 240 250 225 300 205 425 215" strokeWidth="4" />
      <path d="M240 0 255 70 275 140 268 210 255 333" strokeWidth="3" />
      <path d="M315 0 320 80 318 170 330 333" strokeWidth="4" />
      <path d="M390 0 380 80 375 180 360 333" strokeWidth="3" />
      <path d="M85 333 98 240 125 165" strokeWidth="4" />
      <path d="M0 120 70 150 130 135" strokeWidth="2" />
    </g>
    <path d="M240 0 260 70 285 130 280 180 250 220 190 245 155 270 145 333" fill="none" stroke="#d5d8de" strokeWidth="2.500" />
    <path d="M30 190 95 205 150 195 210 175 425 170" fill="none" stroke="#c5ccd6" strokeWidth="1" strokeDasharray="5 3" />
    {mapLabels.map(([x, y, t]) => (
      <text key={t} x={x} y={y} textAnchor="middle" fontSize="8" fill="#98a1ab">{t}</text>
    ))}
    <circle cx="321" cy="143" r="127" fill="#f0dcc8" fillOpacity="0.55" stroke="#f5b566" strokeWidth="0.800" />
    {[[108, 208, 'G319', '#f25555'], [112, 272, 'G319', '#f25555'], [268, 324, 'S206', '#f8b31d'], [281, 144, 'S206', '#f8b31d']].map(([x, y, t, c], i) => (
      <g key={i}>
        <rect x={Number(x) - 8} y={Number(y) - 4} width="16" height="8" rx="1" fill={String(c)} />
        <text x={Number(x)} y={Number(y) + 2} textAnchor="middle" fontSize="5" fill="#fff">{t}</text>
      </g>
    ))}
    {pins.map(([x, y, c, t], i) => (
      <g key={i}>
        <circle cx={x} cy={y} r={t ? 6.500 : 2.800} fill={c} stroke={t ? 'none' : '#fff'} strokeWidth="0.600" />
        {t && <text x={x} y={y + 2} textAnchor="middle" fontSize="5.500" fill="#fff">{t}</text>}
      </g>
    ))}
    <circle cx="268" cy="204" r="3" fill="#fff" stroke="#ee5fa8" strokeWidth="1.400" />
    <path d="M328 140c-6-5-7-8-7-10a7 7 0 0 1 14 0c0 2-1 5-7 10Z" fill="#3c5a86" />
    <circle cx="328" cy="129.500" r="2.600" fill="#fff" />
    <circle cx="378" cy="31" r="3" fill="#fff" stroke="#f5a623" strokeWidth="1.200" />
    <rect x="384" y="26" width="24" height="10" fill="#fff" />
    <text x="396" y="33" textAnchor="middle" fontSize="5" fill="#666">500m</text>
    <rect x="275" y="193" width="52" height="25" fill="#fff" />
    <text x="281" y="203" fontSize="6.500" fill="#444">学校</text>
    <text x="281" y="213" fontSize="5.500" fill="#777">江头中心小学</text>
  </svg>
)

const InputLine = ({ h, children, w = 'w-[141.700px]' }: { h: string; children: ReactNode; w?: string }) => (
  <div className={`flex h-[15px] rounded-[1px] border border-[#e4e6e9] text-[6px] ${w}`}>
    <div className="flex w-[39px] shrink-0 items-center justify-center border-r border-[#e4e6e9] bg-[#f8f9fa] text-[#666]">{h}</div>
    <div className="flex min-w-0 flex-1 items-center justify-between px-[4px]">{children}</div>
  </div>
)

const MapView = ({ side, crumb }: { side: ReactNode; crumb: string }) => (
  <div className="relative flex h-[383px] w-[705px] bg-[#f7f8fa]">
    <Rail w="w-[24.800px]" item="h-[24.400px]" items={railItems} />
    <div className="min-w-0 flex-1 pl-[9.600px] pr-[9px]">
      <Crumb a="城市研究" b={crumb} />
      <div className="flex h-[353px] bg-white pl-[11.600px] pt-[10px]">
        <div className="relative h-[333px] w-[425px] shrink-0 overflow-hidden">
          <MapSvg />
          <div className="absolute left-[5px] top-[5px] w-[156px] bg-white shadow-[0_1px_3px_rgba(0,0,0,0.12)]">
            <div className="flex h-[21px] items-center pl-[7px] pr-[6px] text-[6px] text-[#555]">
              厦门市湖里区金林云里2号楼
              <Search className="ml-auto h-[8px] w-[8px] text-[#bbb]" /><X className="ml-[8px] h-[8px] w-[8px] text-[#bbb]" />
            </div>
            <div className="mt-[3px] flex h-[27px] items-center justify-around bg-[#1cbdb4] px-[5px] text-white">
              <PersonStanding className="h-[10px] w-[10px]" />
              <Bike className="h-[10px] w-[10px]" />
              <Bus className="h-[10px] w-[10px]" />
              <Car className="h-[10px] w-[10px]" />
              <span className="flex h-[16px] w-[16px] items-center justify-center rounded-full bg-[#128a84]"><Circle className="h-[10px] w-[10px]" /></span>
              <Flag className="h-[10px] w-[10px]" />
            </div>
            <div className="px-[7px] pt-[8px]">
              <div className="flex items-center">
                <InputLine h="半径范围" w="w-[124.700px]"><span className="text-[#666]">123</span><span className="text-[#ccc]">米</span></InputLine>
                <span className="ml-[6px] text-[6px] text-[#888]">以内</span>
              </div>
              <div className="mt-[8px] border-t border-[#f0f1f3] pt-[8px]">
                <InputLine h="数据维度"><span className="text-[#666]">住宅</span>{sel}</InputLine>
              </div>
              <div className="mt-[8px]">
                <InputLine h="日期范围"><span className="flex items-center gap-[2px] text-[#d0d3d8]">{cal}起始日期 ~ 结束日期</span></InputLine>
              </div>
            </div>
            <div className="mt-[8px] flex h-[15.500px] items-center justify-between bg-[#f8f9fa] px-[7px] text-[6px] text-[#888]">收起<ChevronsUp className={ico} /></div>
          </div>
          <div className="absolute bottom-[6px] left-[5px] flex h-[38px] w-[38px] flex-col items-center justify-between border border-white bg-black pb-[1px] pt-[3px]">
            <div className="h-[24px] w-[22px] rounded-[50%] bg-[radial-gradient(circle_at_50%_25%,#4a3bd8_0%,#5aa7e0_18%,#f6d342_40%,#f26322_62%,#c3121c_100%)]" />
            <span className="text-[6px] leading-[8px] text-white">热力视图</span>
          </div>
          <div className="absolute bottom-[7px] right-0 flex h-[20px] w-[16px] items-center justify-center rounded-l-[2px] bg-[#1cbdb4]"><ArrowRight className="h-[9px] w-[9px] text-white" /></div>
        </div>
        {side}
      </div>
    </div>
  </div>
)

const Donut = ({ colors, className }: { colors: string[]; className: string }) => {
  const vals = [27, 10, 11, 14, 9, 13, 16]
  let acc = 0
  return (
    <svg viewBox="0 0 60 60" className={className}>
      <g transform="rotate(-100 30 30)">
        {vals.map((v, i) => {
          const el = <circle key={i} cx="30" cy="30" r="23.500" fill="none" stroke={colors[i]} strokeWidth="13" pathLength={100} strokeDasharray={`${v - 0.800} ${100 - v + 0.800}`} strokeDashoffset={-acc} />
          acc += v
          return el
        })}
      </g>
    </svg>
  )
}

const lineData = [
  '14,38 24,26 36,30 48,20 60,22 72,18 84,24 96,23',
  '18,34 24,40 36,30 50,34 62,26 74,28 86,26 96,20',
  '16,30 26,36 38,34 50,28 62,27 74,33 86,32 96,40',
  '18,44 30,38 42,42 54,38 66,36 78,38 90,42 98,52',
  '14,50 26,40 38,44 50,38 62,40 74,48 86,44 98,40',
]

const LineChart = ({ colors, className }: { colors: string[]; className: string }) => (
  <svg viewBox="0 0 100 72" className={className}>
    <text x="0" y="4" fontSize="4" fill="#999">占比：%</text>
    {[[100, 13], [70, 23], [50, 33], [30, 43], [20, 52]].map(([l, y]) => (
      <g key={l}>
        <text x="0" y={y + 1.500} fontSize="4" fill="#999">{l}</text>
        <line x1="9" x2="100" y1={y} y2={y} stroke="#e5d9d0" strokeWidth="0.400" strokeDasharray="1 1" />
      </g>
    ))}
    <line x1="9" x2="100" y1="63" y2="63" stroke="#e5e0dc" strokeWidth="0.500" />
    <line x1="9" x2="9" y1="8" y2="63" stroke="#eee" strokeWidth="0.500" />
    {['2018/02', '2018/05', '2018/08'].map((d, i) => <text key={d} x={10 + i * 29} y="70" fontSize="4" fill="#999">{d}</text>)}
    {lineData.map((p, i) => <polyline key={i} points={p} fill="none" stroke={colors[(i + 5) % 7]} strokeWidth="0.700" />)}
  </svg>
)

const softColors = ['#8480d0', '#5ab6e0', '#4cb5a0', '#f5a55a', '#f0695a', '#f074a8', '#c9468f']
const brightColors = ['#5b6ef5', '#29c5f5', '#3bd09a', '#fdb32f', '#f25555', '#f25fa8', '#b81e8f']

const legendNames = [['停车场', '办公楼', '商场'], ['公寓', '酒店', '住宅', '学校']]

const Legends = ({ colors, className = '', diamond, gap }: { colors: string[]; className?: string; diamond?: boolean; gap: string }) => {
  let k = 0
  return (
    <div className={`flex flex-col ${gap} ${className}`}>
      {legendNames.map((row, r) => (
        <div key={r} className="flex gap-[4px]">
          {row.map(n => {
            const c = colors[k++]
            return (
              <span key={n} className="flex items-center gap-[1.500px] text-[5px] leading-[7px] whitespace-nowrap text-[#999]">
                <svg viewBox="0 0 6 6" className="h-[5px] w-[5px]">
                  {diamond ? <path d="M3 .6 5.400 3 3 5.400 .6 3Z" fill="none" stroke={c} /> : <rect width="6" height="6" fill={c} />}
                </svg>
                {n}
              </span>
            )
          })}
        </div>
      ))}
    </div>
  )
}

const Stat = ({ v }: { v: string }) => (
  <div className="flex h-[48px] w-[100.500px] flex-col items-center justify-center border border-[#fbdcca]">
    <div className="flex items-center gap-[1px] text-[13px] leading-[15px] text-[#444]"><Flame className="h-[10px] w-[10px] fill-[#f25555] text-[#f25555]" />{v}</div>
    <div className="text-[5.500px] leading-[10px] text-[#b8aca4]">约 123,450 人</div>
    <div className="text-[6px] leading-[12px] text-[#888]">区域内常住人口热度</div>
  </div>
)

const PeachPane = () => (
  <div className="ml-[9.200px] mt-[10px] h-[323px] w-[206px] bg-[#fde9dc]">
    <div className="flex gap-[5px]"><Stat v="1.34" /><Stat v="3.09" /></div>
    <div className="mt-[3px] pl-[1px] text-[5.500px] leading-[10px] text-[#aaa]">* 人口热度 = 片区人口 / 全市均值</div>
    <div className="mt-[8px] border-t border-[#f7dccc]" />
    <div className="mt-[8.500px] flex h-[10px] text-[6.500px] text-[#777]">
      <div className="flex w-[100.500px] items-center border-l border-[#1cbdb4] pl-[4px]">区域统计<Maximize className="ml-auto mr-[9px] h-[6px] w-[6px] text-[#ccc]" /></div>
      <div className="flex flex-1 items-center border-l border-[#1cbdb4] pl-[4px]">近期趋势<Maximize className="ml-auto mr-[2px] h-[6px] w-[6px] text-[#ccc]" /></div>
    </div>
    <div className="flex h-[121px] border-b border-[#f7dccc]">
      <div className="w-[100.500px] pl-[3px] pt-[12px]">
        <div className="ml-[3px] h-[60px] w-[60px]"><Donut colors={softColors} className="h-[60px] w-[60px]" /></div>
        <Legends colors={softColors} className="ml-[2px] mt-[8px]" gap="gap-[4px]" />
      </div>
      <div className="flex-1 pl-[2px] pt-[8px]">
        <LineChart colors={softColors} className="h-[72px] w-[100px]" />
        <Legends diamond colors={softColors} className="mt-[4px]" gap="gap-[3px]" />
      </div>
    </div>
    <div className="mt-[10px] grid h-[20px] grid-cols-[68.800px_87.200px_1fr] items-center bg-[#fbe3d6] pl-[9px] text-[6px] text-[#9a8d85]"><span>数据维度</span><span>数量/个</span><span>详情</span></div>
    {[['住宅', 'bg-[#8480d0]'], ['学校', 'bg-[#5ab6e0]'], ['学校', 'bg-[#4cb5a0]']].map(([n, c], i) => (
      <div key={i} className="grid h-[22.600px] grid-cols-[68.800px_87.200px_1fr] items-center pl-[9px] text-[6px] text-[#777]">
        <span className="flex items-center gap-[4px]"><i className={`h-[2px] w-[2px] rounded-full ${c}`} />{n}</span><span>245</span><span className="text-[#1cbdb4]">查看</span>
      </div>
    ))}
  </div>
)

const ListPane = () => (
  <div className="relative ml-[9.800px] mt-[6px] w-[206px]">
    <div className="flex h-[17px] items-center justify-between">
      <span className="text-[6px] text-[#444]"><b className="font-medium">商场信息</b><span className="text-[5px] text-[#aaa]">（数据来源：厦门市发展和改革委员会）</span></span>
      <Btn text="返回" className="h-[17px] w-[33px] border border-[#e9ebef] text-[#666]" />
    </div>
    <div className="mt-[6.700px] border-t border-[#eef0f2]" />
    <div className="mt-[9px] flex h-[15.700px] items-center text-[6px]">
      <div className="flex h-full w-[39px] items-center justify-center border border-[#e9ebef] text-[#888]">统计数据</div>
      <div className="flex h-full w-[39px] items-center justify-center bg-[#1cbdb4] text-white">详情列表</div>
      <span className="ml-auto flex items-center gap-[1px] text-[#aaa]"><Share className={ico} />导出</span>
      <span className="ml-[9px] flex items-center gap-[1px] text-[#aaa]"><Maximize className={ico} />全屏</span>
    </div>
    <div className="mt-[10px] flex gap-[5.500px]">
      <div className="flex h-[15px] w-[184px] rounded-[1px] border border-[#e4e6e9] text-[6px]">
        <div className="flex w-[39px] items-center justify-center border-r border-[#e4e6e9] bg-[#f8f9fa] text-[#666]">数据维度</div>
        <div className="flex flex-1 items-center justify-between px-[3px] text-[#666]">住宅{sel}</div>
      </div>
      <div className="flex h-[15px] w-[15.500px] items-center justify-center border border-[#e4e6e9]">{srch}</div>
    </div>
    <div className="mt-[10.300px] grid h-[21px] grid-cols-[59px_87px_1fr] items-center bg-[#f7f8fa] pl-[10px] text-[6px] text-[#9096a0]"><span>商场名称</span><span>地址</span><span>项目类型</span></div>
    {Array.from({ length: 9 }).map((_, i) => (
      <div key={i} className="grid h-[22.500px] grid-cols-[59px_87px_1fr] items-center pl-[10px] text-[6px] text-[#666]"><span>湖里万达</span><span>厦门市湖里区万达广场...</span><span>项目类型</span></div>
    ))}
    <div className="mt-[1px] flex h-[15px] items-center justify-between border-t border-[#f4f5f6] pl-[10px] pr-[8px] text-[6px] text-[#888]">
      <span>共210条</span>
      <span className="flex items-center gap-[9px]">‹ <span>1</span><span className="flex h-[13px] w-[12px] items-center justify-center bg-[#1cbdb4] text-white">2</span><span>3</span><span>4</span><span>5</span> ›</span>
    </div>
    <Tag orange text="60px" className="left-[150px] top-[4px] h-[10px] w-[17px]" />
  </div>
)

const ChartCard = () => (
  <div className="flex h-[385px] w-[293px] bg-white">
    <div className="w-[158px] pl-[27px] pt-[84px]">
      <div className="ml-[10px] h-[60px] w-[60px]"><Donut colors={brightColors} className="h-[60px] w-[60px]" /></div>
      <Legends colors={brightColors} className="mt-[14px]" gap="gap-[3px]" />
      <div className="mt-[64px] flex items-center">
        <svg viewBox="0 0 80 20" className="ml-[5px] h-[15px] w-[80px]"><polyline points="1,16 12,4 24,9 36,4 50,17 80,6" fill="none" stroke="#f08a8a" strokeWidth="0.800" /></svg>
        <span className="ml-[7px] text-[7px] text-[#888]">1px</span>
      </div>
      <div className="ml-[5px] mt-[17px] w-[80px] border-t border-dotted border-[#e8eaed]" />
      <div className="ml-[5px] mt-[12px] w-[80px] border-t border-[#eceef1]" />
      <div className="ml-[5px] mt-[12px] flex items-center text-[5.500px] text-[#999]">
        <i className="h-[5px] w-[5px] bg-[#b81e8f]" /><span className="ml-[1px]">学校</span>
        <div className="ml-[3px] flex h-[21px] w-[49px] flex-col justify-center bg-[#f5a623] pl-[4px] leading-[7px] text-white"><span>color: TextGray</span><span>font-size: 10px</span></div>
      </div>
    </div>
    <div className="relative flex-1 pt-[81px]">
      <LineChart colors={brightColors} className="h-[72px] w-[110px]" />
      <Legends diamond colors={brightColors} className="mt-[4px]" gap="gap-[3px]" />
      <div className="absolute left-[76px] top-[95px] h-[46px] w-[33px] rounded-[1px] bg-[#444] px-[3px] py-[3px] text-[4.500px] leading-[8px] whitespace-nowrap text-white">
        {[0, 1, 2, 3, 4].map(i => <p key={i}>数据1.35%</p>)}
      </div>
      <div className="mt-[87px] text-[7px] text-[#666]">饼图及折线图颜色排序：</div>
      <div className="mt-[4px] flex">
        {brightColors.map(c => <svg key={c} viewBox="0 0 10 10" preserveAspectRatio="none" className="h-[10px] w-[11.400px]"><rect width="10" height="10" fill={c} /></svg>)}
      </div>
    </div>
  </div>
)

/* ---------- form view ---------- */

const FormField = ({ ph, end = '元' }: { ph: string; end?: string }) => (
  <Field dark={ph === '3458.00'} className="mt-[2px] h-[15px] w-[117.500px]" text={ph} end={<span className="text-[#ccc]">{end}</span>} />
)

const FormCell = ({ ph }: { ph: string }) => (
  <div className="w-[117.500px]"><FormLabel text="过往三年平均销售额" /><FormField ph={ph} /></div>
)

const SecTitle = ({ t }: { t: string }) => <div className="flex h-[10px] items-center border-l border-[#1cbdb4] pl-[2px] text-[6.500px] font-medium text-[#444]">{t}</div>

const FormView = () => (
  <div className="relative flex h-[382px] w-[622.500px] bg-[#f7f8fa]">
    <Rail w="w-[24.600px]" item="h-[24.400px]" items={railItems} />
    <div className="min-w-0 flex-1 pl-[9.200px] pr-[10.800px]">
      <Crumb a="商管视角" b="品牌库" />
      <div className="h-[352.300px] bg-white">
        <div className="flex h-[29.300px] justify-end border-b border-[#eef0f2] pr-[9px] pt-[7px]">
          <div className="flex gap-[5px]">
            <Btn text="取消" className="h-[15px] w-[33px] border border-[#e9ebef] text-[#666]" />
            <Btn text="保存" className="h-[15px] w-[33px] bg-[#1cbdb4] text-white" />
          </div>
        </div>
        <div className="pl-[10px] pr-[9px] pt-[14px]">
          <SecTitle t="销售额及占比" />
          <div className="mt-[11px] flex gap-[39.500px]">
            <FormCell ph="请输入平均销售额" /><FormCell ph="3458.00" /><FormCell ph="请输入2018年万科平均占率" />
          </div>
          <div className="mt-[11px]"><FormCell ph="请输入销售额占有占比" /></div>
          <div className="mt-[15px] border-t border-[#eef0f2]" />
          <div className="mt-[15px]"><SecTitle t="租金明细" /></div>
          <div className="mt-[10px] flex gap-[39.500px]"><FormCell ph="请输入商业租金明细" /><FormCell ph="请输入产办租金明细" /></div>
          <div className="mt-[15px] border-t border-[#eef0f2]" />
          <div className="mt-[15px]"><SecTitle t="基本经济数据" /></div>
          <div className="mt-[10px] flex gap-[39.500px]">
            <FormCell ph="请输入平均销售额" /><FormCell ph="请输入2018年度销售数据" /><FormCell ph="请输入2018年万科平均占率" />
          </div>
        </div>
      </div>
    </div>
    <Tag orange text="60px" className="left-[220px] top-[30px] h-[10px] w-[17px]" />
    <Tag text="30px" className="left-[302px] top-[51px] h-[11px] w-[17px]" />
    <Tag text="32px" className="left-[106px] top-[73px] h-[10px] w-[16px]" />
    <Tag text="25px" className="left-[106px] top-[113px] h-[10px] w-[16px]" />
    <Tag text="30px" className="left-[106px] top-[152px] h-[10px] w-[16px]" />
  </div>
)

const ModalView = () => (
  <div className="relative ml-[29px] h-[382px] w-[603px] bg-[#5f6063] pl-[22px] pt-[23px]">
    <div className="flex items-start">
      <div className="[zoom:1.1]"><ModalC /></div>
      <div className="ml-[50px] mt-[15px] [zoom:1.1]"><ModalD /></div>
    </div>
    <div className="mt-[20px] [zoom:1.1]"><ModalE /></div>
    <Tag text="30px" className="left-[93px] top-[50px] h-[10px] w-[18px]" />
    <Tag text="40px" className="left-[23px] top-[79px] h-[10px] w-[18px]" />
    <Tag text="25px" className="left-[145px] top-[89px] h-[11px] w-[19px]" />
    <Tag text="30px" className="left-[145px] top-[129px] h-[10px] w-[19px]" />
    <Tag text="20px" className="left-[332px] top-[92px] h-[11px] w-[18px]" />
    <Tag text="30px" className="left-[25px] top-[235px] h-[10px] w-[18px]" />
    <Tag text="20px" className="left-[189px] top-[233px] h-[11px] w-[19px]" />
  </div>
)

const ViewTitle = ({ t, className = '' }: { t: string; className?: string }) => (
  <h3 className={`h-[20px] text-[15px] font-medium leading-[20px] text-[#222] ${className}`}>{t}</h3>
)

export default function App() {
  return (
    <div className="relative h-[4004px] w-[1984px] overflow-hidden bg-white text-[#333] [font-family:Roboto,'Noto_Sans_CJK_SC',sans-serif]">
      <Hero />

      <section className="ml-[77px] w-[1830px]">
        <SectionHead title="VCity城市地图UI kits" sub="COMPONENTS" h="h-[74px]" size="text-[18px]" pad="pl-[34px]" />
        <div className="flex h-[1366px] gap-[13px] bg-[#f2f3f8] pl-[25px] pt-[31px]">
          <div className="w-[1067px]">
            <div className="flex gap-[14px]">
              <TextColor />
              <ButtonCard />
              <div className="-ml-[1px]"><FormCard /></div>
            </div>
            <div className="mt-[14px] flex gap-[14px]">
              <div className="w-[487px]">
                <InputCard />
                <div className="mt-[13px]"><MenuCard /></div>
                <div className="mt-[14px] flex gap-[13px]"><RadioCard /><EmptyCard /></div>
              </div>
              <div className="w-[566px]">
                <SelectCard />
                <div className="mt-[14px]"><PickerCard /></div>
              </div>
            </div>
          </div>
          <div className="w-[701px]">
            <ModalCard />
            <div className="mt-[14px] flex gap-[13px]"><TableCard /><BadgeCard /></div>
            <div className="mt-[13px] flex gap-[13px]">
              <UploadCard />
              <div className="w-[252px]">
                <MessageCard />
                <div className="mt-[14px]"><TabsCard /></div>
              </div>
            </div>
          </div>
        </div>
      </section>

      <section className="ml-[82px] mt-[108px] w-[1820px]">
        <SectionHead title="VCity城市地图UI kits" sub="VIEWS" h="h-[82px]" size="text-[20px]" pad="pl-[24px]" />
        <div className="h-[1817px] bg-[#f2f3f8] pl-[44px] pt-[52px]">
          <div className="flex gap-[20.500px]">
            <div>
              <ViewTitle t="表格视图" />
              <div className="mt-[14px]"><TableView mode="plain" /></div>
            </div>
            <div>
              <ViewTitle t="表格-可展开筛选项" />
              <div className="mt-[14px]"><TableView mode="expand" /></div>
            </div>
          </div>
          <ViewTitle t="页签" className="mt-[15.700px]" />
          <div className="mt-[14.300px]"><TableView mode="tabs" /></div>

          <ViewTitle t="地图视图" className="mt-[43px]" />
          <div className="mt-[19px] flex items-start">
            <MapView crumb="城市万花筒" side={<PeachPane />} />
            <div className="ml-[11px] -mt-[3px]"><ChartCard /></div>
            <div className="ml-[43px]"><MapView crumb="城市万花筒" side={<ListPane />} /></div>
          </div>

          <div className="mt-[42px] flex">
            <ViewTitle t="表单视图" className="w-[651.500px]" />
            <ViewTitle t="模态视图" />
          </div>
          <div className="mt-[14px] flex"><FormView /><ModalView /></div>
        </div>
      </section>
    </div>
  )
}
